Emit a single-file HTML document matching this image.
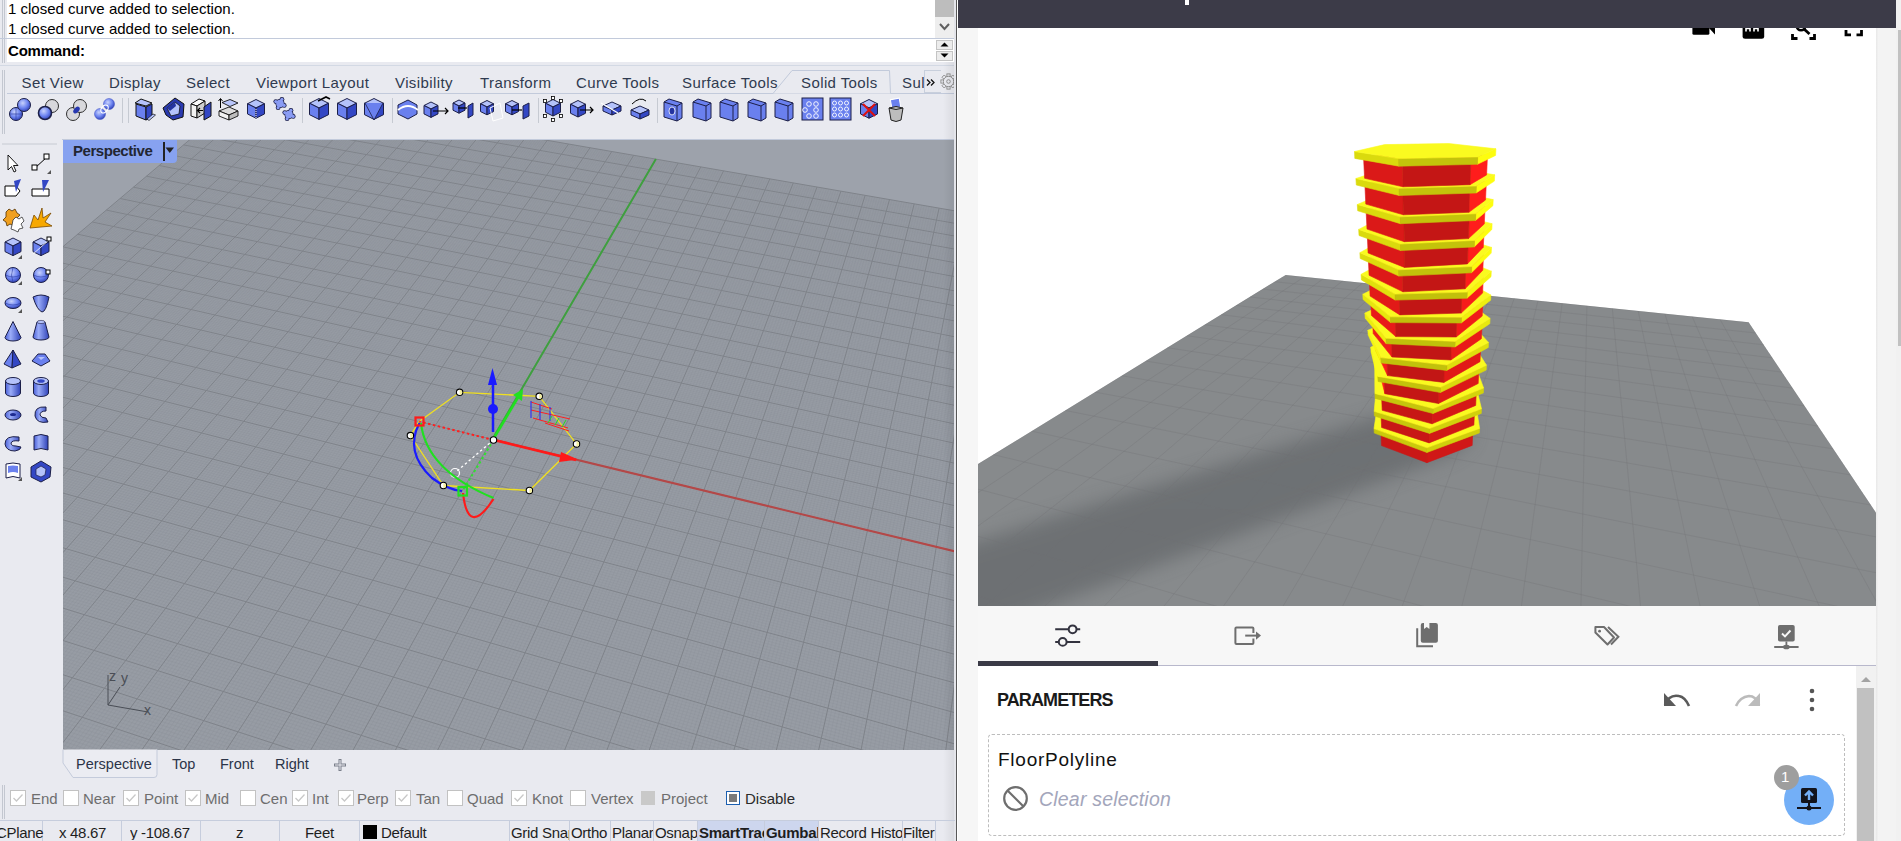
<!DOCTYPE html><html><head><meta charset="utf-8"><style>
*{margin:0;padding:0;box-sizing:border-box}
html,body{width:1901px;height:841px;overflow:hidden;background:#fff;font-family:"Liberation Sans", sans-serif}
.a{position:absolute}
.t{position:absolute;white-space:nowrap;line-height:1}
</style></head><body>
<div class="a" style="left:0;top:0;width:957px;height:841px;background:#e9eaf0;overflow:hidden"><div class="a" style="left:2px;top:0;width:1px;height:63px;background:#c3c7d0"></div><div class="a" style="left:4px;top:0;width:1px;height:63px;background:#c3c7d0"></div><div class="a" style="left:7px;top:0;width:948px;height:62px;background:#fff"></div><div class="t" style="left:8px;top:1px;font-size:15px;color:#000">1 closed curve added to selection.</div><div class="t" style="left:8px;top:21px;font-size:15px;color:#000">1 closed curve added to selection.</div><div class="a" style="left:0;top:38px;width:955px;height:1px;background:#c2cadb"></div><div class="t" style="left:8px;top:42.5px;font-size:15px;font-weight:bold;color:#000;letter-spacing:-0.2px">Command:</div><div class="a" style="left:935px;top:0;width:19px;height:38px;background:#eeeeee"></div><div class="a" style="left:935px;top:0;width:19px;height:17px;background:#bdbdbd"></div><svg class="a" style="left:935px;top:17px" width="19" height="21"><path d="M5 7 L9.5 12 L14 7" stroke="#606060" stroke-width="2" fill="none"/></svg><div class="a" style="left:936px;top:40px;width:17px;height:10px;background:#ececec;border:1px solid #c4c4c4"></div><div class="a" style="left:936px;top:51px;width:17px;height:10px;background:#ececec;border:1px solid #c4c4c4"></div><svg class="a" style="left:936px;top:40px" width="17" height="21"><path d="M4.5 6.5 L8.5 2.5 L12.5 6.5Z M4.5 13.5 L8.5 17.5 L12.5 13.5Z" fill="#000"/></svg><div class="a" style="left:0;top:65px;width:955px;height:1px;background:#d3d9e4"></div><div class="a" style="left:2px;top:70px;width:1px;height:64px;background:#c3c7d0"></div><div class="a" style="left:4px;top:70px;width:1px;height:64px;background:#c3c7d0"></div><div class="a" style="left:7px;top:93px;width:948px;height:1px;background:#c2cadb"></div><svg class="a" style="left:770px;top:69px" width="130" height="26"><path d="M3 24.5 L22 1.5 L119.5 1.5 L120.5 24.5" fill="#e9eaf0" stroke="#c2cadb" stroke-width="1"/></svg><div class="t" style="left:21.5px;top:75px;font-size:15px;letter-spacing:0.4px;color:#2f3a4f">Set View</div><div class="t" style="left:109px;top:75px;font-size:15px;letter-spacing:0.4px;color:#2f3a4f">Display</div><div class="t" style="left:186px;top:75px;font-size:15px;letter-spacing:0.4px;color:#2f3a4f">Select</div><div class="t" style="left:256px;top:75px;font-size:15px;letter-spacing:0.4px;color:#2f3a4f">Viewport Layout</div><div class="t" style="left:395px;top:75px;font-size:15px;letter-spacing:0.4px;color:#2f3a4f">Visibility</div><div class="t" style="left:480px;top:75px;font-size:15px;letter-spacing:0.4px;color:#2f3a4f">Transform</div><div class="t" style="left:576px;top:75px;font-size:15px;letter-spacing:0.4px;color:#2f3a4f">Curve Tools</div><div class="t" style="left:682px;top:75px;font-size:15px;letter-spacing:0.4px;color:#2f3a4f">Surface Tools</div><div class="t" style="left:801px;top:75px;font-size:15px;letter-spacing:0.4px;color:#2f3a4f">Solid Tools</div><div class="t" style="left:902px;top:75px;font-size:15px;letter-spacing:0.4px;color:#2f3a4f">Sul</div><div class="a" style="left:924px;top:70px;width:17px;height:23px;border:1px solid #c8cfdc;border-right:none;background:#e9eaf0"></div><svg class="a" style="left:925px;top:78px" width="12" height="10"><path d="M2 1.5 L5 4.5 L2 7.5 M6 1.5 L9 4.5 L6 7.5" stroke="#111" stroke-width="1.3" fill="none"/></svg><svg class="a" style="left:940px;top:73px" width="17" height="17"><g transform="translate(8.5 8.5)"><rect x="-1.6" y="-7.6" width="3.2" height="3" fill="none" stroke="#8a8a8a" stroke-width="0.9" transform="rotate(0)"/><rect x="-1.6" y="-7.6" width="3.2" height="3" fill="none" stroke="#8a8a8a" stroke-width="0.9" transform="rotate(45)"/><rect x="-1.6" y="-7.6" width="3.2" height="3" fill="none" stroke="#8a8a8a" stroke-width="0.9" transform="rotate(90)"/><rect x="-1.6" y="-7.6" width="3.2" height="3" fill="none" stroke="#8a8a8a" stroke-width="0.9" transform="rotate(135)"/><rect x="-1.6" y="-7.6" width="3.2" height="3" fill="none" stroke="#8a8a8a" stroke-width="0.9" transform="rotate(180)"/><rect x="-1.6" y="-7.6" width="3.2" height="3" fill="none" stroke="#8a8a8a" stroke-width="0.9" transform="rotate(225)"/><rect x="-1.6" y="-7.6" width="3.2" height="3" fill="none" stroke="#8a8a8a" stroke-width="0.9" transform="rotate(270)"/><rect x="-1.6" y="-7.6" width="3.2" height="3" fill="none" stroke="#8a8a8a" stroke-width="0.9" transform="rotate(315)"/><circle r="5.2" fill="#e9eaf0" stroke="#8a8a8a" stroke-width="0.9"/><circle r="1.8" fill="none" stroke="#8a8a8a" stroke-width="0.9"/></g></svg><div class="a" style="left:62px;top:139px;width:893px;height:1px;background:#c2cadb"></div><svg class="a" style="left:0;top:0" width="957" height="140"><defs><radialGradient id="sph" cx="0.4" cy="0.35" r="0.7"><stop offset="0" stop-color="#c8d2fc"/><stop offset="0.55" stop-color="#6d84f0"/><stop offset="1" stop-color="#2c3cb0"/></radialGradient>
<linearGradient id="cyl" x1="0" x2="1" y1="0" y2="0"><stop offset="0" stop-color="#4a60d8"/><stop offset="0.35" stop-color="#9aacf8"/><stop offset="1" stop-color="#2f42b8"/></linearGradient></defs><circle cx="16" cy="114" r="6.5" fill="url(#sph)" stroke="#1c1f48" stroke-width="1"/><circle cx="24" cy="105" r="6.5" fill="url(#sph)" stroke="#1c1f48" stroke-width="1"/><path d="M10 114 H22 M16 108 V120" stroke="#2a3aa0" stroke-width="0.6"/><circle cx="52" cy="106" r="6.5" fill="#d8d8dc" stroke="#303030" stroke-width="1"/><circle cx="45" cy="113" r="6.5" fill="url(#sph)" stroke="#1c1f48" stroke-width="1.6"/><circle cx="73" cy="114" r="6.5" fill="#d8d8dc" stroke="#303030" stroke-width="1"/><circle cx="80" cy="106" r="6.5" fill="#d8d8dc" stroke="#303030" stroke-width="1"/><ellipse cx="76.5" cy="110" rx="2.5" ry="4" transform="rotate(40 76.5 110)" fill="#2838b0"/><circle cx="100" cy="114" r="5.5" fill="url(#sph)" stroke="#3a4ac0" stroke-width="0.5"/><circle cx="109" cy="104" r="5.5" fill="url(#sph)" stroke="#3a4ac0" stroke-width="0.5"/><ellipse cx="104.5" cy="109" rx="3" ry="4.5" transform="rotate(40 104.5 109)" fill="none" stroke="#fff" stroke-width="1.2"/><path d="M122.5 98 V123 M128.5 98 V123" stroke="#c6cad2"/><path d="M135 103 L141 99 L152 103 L146 106 Z" fill="#b4c2fa" stroke="#111"/><path d="M136 104 L146 107 L146 120 L136 116 Z" fill="#6a80ee" stroke="#111"/><path d="M146 107 L152 104 L152 117 L146 120 Z" fill="#3347c4" stroke="#111"/><path d="M147 119 L153 114 L155.5 115 L149 120.5 Z" fill="#b4c2fa" stroke="#111" stroke-width="0.7"/><path d="M163 108 L175 98 L184 104 L183 117 L173 120 L166 115 Z" fill="#2a3ab0" stroke="#111"/><path d="M167 108 L175 102 L180 106 L179 114 L171 116 Z" fill="#b4c2fa" stroke="#111" stroke-width="0.8"/><path d="M167 108 L175 102 L176 106 L170 111 Z" fill="#2433a0"/><path d="M191 104 L199 99 L205 101 L197 106 Z" fill="#fafafa" stroke="#111"/><path d="M191 104 L197 106 L197 118 L191 116 Z" fill="#f2f2f2" stroke="#111"/><path d="M197 106 L205 101 L205 113 L197 118 Z" fill="#cfcfcf" stroke="#111"/><path d="M204 107 L211 102 L211 116 L204 120 Z" fill="#3347c4" stroke="#111"/><path d="M203 110.5 H198 M200 108 L197.5 110.5 L200 113" stroke="#000" stroke-width="1.2" fill="none"/><path d="M222 102.5 L230 99.5 L238 103 L230 106.5 Z" fill="#b9c6fb" stroke="#111" stroke-width="0.9"/><path d="M219 111 L229 107 L238 111 L229 115 Z" fill="#dcdcdc" stroke="#111" stroke-width="0.9"/><path d="M219 111 L229 115 L229 120 L219 116 Z" fill="#f2f2f2" stroke="#111" stroke-width="0.9"/><path d="M229 115 L238 111 L238 116 L229 120 Z" fill="#bdbdbd" stroke="#111" stroke-width="0.9"/><path d="M220.5 108 V99 M218.5 101 L220.5 98.5 L222.5 101" stroke="#000" stroke-width="1" fill="none"/><path d="M247.5,103.75 L256,99.5 L264.5,103.75 L256,108 Z" fill="#b4c2fa" stroke="#1c1f48" stroke-width="1"/><path d="M247.5,103.75 L256,108 L256,118.2 L247.5,113.95 Z" fill="#6a80ee" stroke="#1c1f48" stroke-width="1"/><path d="M256,108 L264.5,103.75 L264.5,113.95 L256,118.2 Z" fill="#3347c4" stroke="#1c1f48" stroke-width="1"/><path d="M256 109 V120" stroke="#fff" stroke-dasharray="1 1"/><circle cx="284.2" cy="105.4" r="2.4" fill="#1c1f48"/><circle cx="278.1" cy="107.7" r="2.4" fill="#1c1f48"/><circle cx="275.8" cy="101.6" r="2.4" fill="#1c1f48"/><circle cx="281.9" cy="99.3" r="2.4" fill="#1c1f48"/><circle cx="280" cy="103.5" r="4.6" fill="#1c1f48"/><circle cx="284.2" cy="105.4" r="1.6" fill="#8a9cf4"/><circle cx="278.1" cy="107.7" r="1.6" fill="#8a9cf4"/><circle cx="275.8" cy="101.6" r="1.6" fill="#8a9cf4"/><circle cx="281.9" cy="99.3" r="1.6" fill="#8a9cf4"/><circle cx="280" cy="103.5" r="3.8" fill="#8a9cf4"/><circle cx="293.2" cy="116.4" r="2.4" fill="#1c1f48"/><circle cx="287.1" cy="118.7" r="2.4" fill="#1c1f48"/><circle cx="284.8" cy="112.6" r="2.4" fill="#1c1f48"/><circle cx="290.9" cy="110.3" r="2.4" fill="#1c1f48"/><circle cx="289" cy="114.5" r="4.6" fill="#1c1f48"/><circle cx="293.2" cy="116.4" r="1.6" fill="#8a9cf4"/><circle cx="287.1" cy="118.7" r="1.6" fill="#8a9cf4"/><circle cx="284.8" cy="112.6" r="1.6" fill="#8a9cf4"/><circle cx="290.9" cy="110.3" r="1.6" fill="#8a9cf4"/><circle cx="289" cy="114.5" r="3.8" fill="#8a9cf4"/><path d="M302.5 98 V123" stroke="#c6cad2"/><path d="M309.5,103.25 L319,98.5 L328.5,103.25 L319,108 Z" fill="#b4c2fa" stroke="#1c1f48" stroke-width="1"/><path d="M309.5,103.25 L319,108 L319,119.4 L309.5,114.65 Z" fill="#6a80ee" stroke="#1c1f48" stroke-width="1"/><path d="M319,108 L328.5,103.25 L328.5,114.65 L319,119.4 Z" fill="#3347c4" stroke="#1c1f48" stroke-width="1"/><path d="M318 101 L326 97 L330 99" stroke="#000" stroke-width="1.6" fill="none"/><path d="M337.5,103.25 L347,98.5 L356.5,103.25 L347,108 Z" fill="#b4c2fa" stroke="#1c1f48" stroke-width="1"/><path d="M337.5,103.25 L347,108 L347,119.4 L337.5,114.65 Z" fill="#6a80ee" stroke="#1c1f48" stroke-width="1"/><path d="M347,108 L356.5,103.25 L356.5,114.65 L347,119.4 Z" fill="#3347c4" stroke="#1c1f48" stroke-width="1"/><path d="M364.5,103.25 L374,98.5 L383.5,103.25 L374,108 Z" fill="#b4c2fa" stroke="#1c1f48" stroke-width="1"/><path d="M364.5,103.25 L374,108 L374,119.4 L364.5,114.65 Z" fill="#6a80ee" stroke="#1c1f48" stroke-width="1"/><path d="M374,108 L383.5,103.25 L383.5,114.65 L374,119.4 Z" fill="#3347c4" stroke="#1c1f48" stroke-width="1"/><path d="M365 103 L374 120 L383 103" stroke="#1c1f48" fill="#6a80ee" stroke-width="0.8"/><path d="M392.5 98 V123" stroke="#c6cad2"/><path d="M398 105 L408 100 L417 105 L417 114 L408 119 L398 114 Z" fill="#6a80ee" stroke="#1c1f48"/><path d="M398 110 Q408 102 418 110" stroke="#fff" stroke-width="2" fill="none"/><path d="M424.0,105.5 L431,102.0 L438.0,105.5 L431,109 Z" fill="#b4c2fa" stroke="#1c1f48" stroke-width="1"/><path d="M424.0,105.5 L431,109 L431,117.4 L424.0,113.9 Z" fill="#6a80ee" stroke="#1c1f48" stroke-width="1"/><path d="M431,109 L438.0,105.5 L438.0,113.9 L431,117.4 Z" fill="#3347c4" stroke="#1c1f48" stroke-width="1"/><path d="M433 111 H448 M445 108 L448 111 L445 114" stroke="#000" stroke-width="1.2" fill="none"/><path d="M453.0,103.0 L459,100.0 L465.0,103.0 L459,106 Z" fill="#b4c2fa" stroke="#1c1f48" stroke-width="1"/><path d="M453.0,103.0 L459,106 L459,113.2 L453.0,110.2 Z" fill="#6a80ee" stroke="#1c1f48" stroke-width="1"/><path d="M459,106 L465.0,103.0 L465.0,110.2 L459,113.2 Z" fill="#3347c4" stroke="#1c1f48" stroke-width="1"/><path d="M468 106 L473 103 L473 115 L468 118 Z" fill="#3347c4" stroke="#1c1f48"/><path d="M458 108 H467" stroke="#000" stroke-width="1.2"/><path d="M480.5,103.75 L487,100.5 L493.5,103.75 L487,107 Z" fill="#b4c2fa" stroke="#1c1f48" stroke-width="1"/><path d="M480.5,103.75 L487,107 L487,114.8 L480.5,111.55 Z" fill="#6a80ee" stroke="#1c1f48" stroke-width="1"/><path d="M487,107 L493.5,103.75 L493.5,111.55 L487,114.8 Z" fill="#3347c4" stroke="#1c1f48" stroke-width="1"/><path d="M490 108 L500 103 L503 118 L493 121 Z" fill="none" stroke="#fff"/><path d="M505.5,103.75 L512,100.5 L518.5,103.75 L512,107 Z" fill="#b4c2fa" stroke="#1c1f48" stroke-width="1"/><path d="M505.5,103.75 L512,107 L512,114.8 L505.5,111.55 Z" fill="#6a80ee" stroke="#1c1f48" stroke-width="1"/><path d="M512,107 L518.5,103.75 L518.5,111.55 L512,114.8 Z" fill="#3347c4" stroke="#1c1f48" stroke-width="1"/><path d="M523 106 L529 103 L529 116 L523 119 Z" fill="#3347c4" stroke="#1c1f48"/><path d="M512 110 H522" stroke="#000" stroke-width="1.2"/><path d="M538.5 98 V123" stroke="#c6cad2"/><path d="M545.5,103.25 L553,99.5 L560.5,103.25 L553,107 Z" fill="#b4c2fa" stroke="#1c1f48" stroke-width="1"/><path d="M545.5,103.25 L553,107 L553,116.0 L545.5,112.25 Z" fill="#6a80ee" stroke="#1c1f48" stroke-width="1"/><path d="M553,107 L560.5,103.25 L560.5,112.25 L553,116.0 Z" fill="#3347c4" stroke="#1c1f48" stroke-width="1"/><rect x="543.5" y="99.5" width="3" height="3" fill="#fff" stroke="#000" stroke-width="0.8"/><rect x="559.5" y="99.5" width="3" height="3" fill="#fff" stroke="#000" stroke-width="0.8"/><rect x="543.5" y="114.5" width="3" height="3" fill="#fff" stroke="#000" stroke-width="0.8"/><rect x="559.5" y="114.5" width="3" height="3" fill="#fff" stroke="#000" stroke-width="0.8"/><rect x="551.5" y="96.5" width="3" height="3" fill="#fff" stroke="#000" stroke-width="0.8"/><rect x="551.5" y="118.5" width="3" height="3" fill="#fff" stroke="#000" stroke-width="0.8"/><path d="M570.5,104.25 L578,100.5 L585.5,104.25 L578,108 Z" fill="#b4c2fa" stroke="#1c1f48" stroke-width="1"/><path d="M570.5,104.25 L578,108 L578,117.0 L570.5,113.25 Z" fill="#6a80ee" stroke="#1c1f48" stroke-width="1"/><path d="M578,108 L585.5,104.25 L585.5,113.25 L578,117.0 Z" fill="#3347c4" stroke="#1c1f48" stroke-width="1"/><path d="M580 110 H593 M590 107 L593 110 L590 113" stroke="#000" stroke-width="1.2" fill="none"/><path d="M603,106 L612,102 L621,106 L612,110 Z" fill="#b4c2fa" stroke="#1c1f48"/><path d="M603,106 L612,110 L612,115 L603,111 Z" fill="#6a80ee" stroke="#1c1f48"/><path d="M612,110 L621,106 L621,111 L612,115 Z" fill="#3347c4" stroke="#1c1f48"/><path d="M601 103 L618 113" stroke="#fff" stroke-width="1.2"/><path d="M631,110 L640,106 L649,110 L640,114 Z" fill="#b4c2fa" stroke="#1c1f48"/><path d="M631,110 L640,114 L640,119 L631,115 Z" fill="#6a80ee" stroke="#1c1f48"/><path d="M640,114 L649,110 L649,115 L640,119 Z" fill="#3347c4" stroke="#1c1f48"/><path d="M632 104 Q640 96 646 101" stroke="#000" fill="none"/><path d="M657.5 98 V123" stroke="#c6cad2"/><path d="M664 102 L669 99 L682 103 L682 118 L677 121 L664 117 Z" fill="#6a80ee" stroke="#1c1f48"/><path d="M677 106 L682 103 M677 106 L677 121 M664 102 L677 106" stroke="#1c1f48" fill="none"/><path d="M693 102 L698 99 L711 103 L711 118 L706 121 L693 117 Z" fill="#6a80ee" stroke="#1c1f48"/><path d="M706 106 L711 103 M706 106 L706 121 M693 102 L706 106" stroke="#1c1f48" fill="none"/><path d="M720 102 L725 99 L738 103 L738 118 L733 121 L720 117 Z" fill="#6a80ee" stroke="#1c1f48"/><path d="M733 106 L738 103 M733 106 L733 121 M720 102 L733 106" stroke="#1c1f48" fill="none"/><path d="M748 102 L753 99 L766 103 L766 118 L761 121 L748 117 Z" fill="#6a80ee" stroke="#1c1f48"/><path d="M761 106 L766 103 M761 106 L761 121 M748 102 L761 106" stroke="#1c1f48" fill="none"/><path d="M775 102 L780 99 L793 103 L793 118 L788 121 L775 117 Z" fill="#6a80ee" stroke="#1c1f48"/><path d="M788 106 L793 103 M788 106 L788 121 M775 102 L788 106" stroke="#1c1f48" fill="none"/><ellipse cx="672" cy="111" rx="3" ry="4" fill="#2433a0" stroke="#fff" stroke-width="0.8"/><rect x="802" y="98" width="21" height="22" fill="#6a80ee" stroke="#1c1f48"/><circle cx="809" cy="104" r="2.3" fill="none" stroke="#fff" stroke-width="0.9"/><circle cx="816" cy="104" r="2.3" fill="none" stroke="#fff" stroke-width="0.9"/><circle cx="805" cy="110" r="2.3" fill="none" stroke="#fff" stroke-width="0.9"/><circle cx="816" cy="110" r="2.3" fill="none" stroke="#fff" stroke-width="0.9"/><circle cx="809" cy="116" r="2.3" fill="none" stroke="#fff" stroke-width="0.9"/><circle cx="816" cy="116" r="2.3" fill="none" stroke="#fff" stroke-width="0.9"/><rect x="830" y="98" width="21" height="22" fill="#6a80ee" stroke="#1c1f48"/><circle cx="834.5" cy="103" r="2" fill="none" stroke="#fff" stroke-width="0.9"/><circle cx="834.5" cy="109" r="2" fill="none" stroke="#fff" stroke-width="0.9"/><circle cx="834.5" cy="115" r="2" fill="none" stroke="#fff" stroke-width="0.9"/><circle cx="840.5" cy="103" r="2" fill="none" stroke="#fff" stroke-width="0.9"/><circle cx="840.5" cy="109" r="2" fill="none" stroke="#fff" stroke-width="0.9"/><circle cx="840.5" cy="115" r="2" fill="none" stroke="#fff" stroke-width="0.9"/><circle cx="846.5" cy="103" r="2" fill="none" stroke="#fff" stroke-width="0.9"/><circle cx="846.5" cy="109" r="2" fill="none" stroke="#fff" stroke-width="0.9"/><circle cx="846.5" cy="115" r="2" fill="none" stroke="#fff" stroke-width="0.9"/><path d="M860.5,103.75 L869,99.5 L877.5,103.75 L869,108 Z" fill="#b4c2fa" stroke="#1c1f48" stroke-width="1"/><path d="M860.5,103.75 L869,108 L869,118.2 L860.5,113.95 Z" fill="#6a80ee" stroke="#1c1f48" stroke-width="1"/><path d="M869,108 L877.5,103.75 L877.5,113.95 L869,118.2 Z" fill="#3347c4" stroke="#1c1f48" stroke-width="1"/><path d="M863 104 L875 116 M875 104 L863 116" stroke="#e01010" stroke-width="2"/><rect x="891" y="99" width="9" height="9" fill="#6a80ee" stroke="#fff" transform="rotate(-10 895 103)"/><path d="M889 108 Q896 105 903 108 L901 120 Q896 123 891 120 Z" fill="#bdbdbd" stroke="#222"/><path d="M889 108 Q896 111 903 108" stroke="#222" fill="none"/></svg><svg class="a" style="left:0;top:140px" width="62" height="360"><g transform="translate(0,-140)"><defs><radialGradient id="sph2" cx="0.4" cy="0.35" r="0.7"><stop offset="0" stop-color="#c8d2fc"/><stop offset="0.55" stop-color="#6d84f0"/><stop offset="1" stop-color="#2c3cb0"/></radialGradient>
<linearGradient id="cyl2" x1="0" x2="1" y1="0" y2="0"><stop offset="0" stop-color="#4a60d8"/><stop offset="0.35" stop-color="#9aacf8"/><stop offset="1" stop-color="#2f42b8"/></linearGradient></defs><path d="M2 144 H57" stroke="#c6cad2"/><path d="M8 155 L8 170 L11.5 166.5 L14 172 L16 171 L13.5 165.5 L18 165.5 Z" fill="#fff" stroke="#000" stroke-width="0.9"/><path d="M35 168 L47 157" stroke="#000"/><rect x="32" y="165" width="5" height="5" fill="#fff" stroke="#000"/><rect x="44" y="154" width="5" height="5" fill="#fff" stroke="#000"/><path d="M47 174 l4 0 l0 -4 z" fill="#555"/><path d="M5 186 H16 L20 191 L16 196 H5 Z" fill="#fff" stroke="#000"/><path d="M14 181 L21 179 L16 192 Z" fill="#3347c4"/><path d="M32 189 H49 V196 H32 Z" fill="#fff" stroke="#000"/><path d="M42 180 L49 180 L43 192 Z" fill="#3347c4"/><path d="M6 212 l3 -3 l3 2 l3 -2 l2 4 l3 2 l-3 3 l2 4 l-4 1 l-1 3 l-4 -2 l-3 2 l-1 -4 l-3 -2 l3 -3 z" fill="#f0a020" stroke="#503000" stroke-width="0.8"/><path d="M13 220 l3 -3 l3 2 l3 -2 l2 4 l-3 3 l2 4 l-4 1 l-1 3 l-4 -2 l-3 -1 l1 -4 z" fill="#fff" stroke="#333" stroke-width="0.8"/><path d="M30 228 L34 215 L38 220 L42 208 L43 218 L51 213 L45 222 L52 226 Z" fill="#f7a800" stroke="#7a4a00" stroke-width="0.8"/><path d="M5.0,242.0 L13,238.0 L21.0,242.0 L13,246 Z" fill="#b4c2fa" stroke="#1c1f48" stroke-width="1"/><path d="M5.0,242.0 L13,246 L13,255.6 L5.0,251.6 Z" fill="#6a80ee" stroke="#1c1f48" stroke-width="1"/><path d="M13,246 L21.0,242.0 L21.0,251.6 L13,255.6 Z" fill="#3347c4" stroke="#1c1f48" stroke-width="1"/><path d="M18 259 l4 0 l0 -4 z" fill="#555"/><path d="M33.0,242.0 L41,238.0 L49.0,242.0 L41,246 Z" fill="#b4c2fa" stroke="#1c1f48" stroke-width="1"/><path d="M33.0,242.0 L41,246 L41,255.6 L33.0,251.6 Z" fill="#6a80ee" stroke="#1c1f48" stroke-width="1"/><path d="M41,246 L49.0,242.0 L49.0,251.6 L41,255.6 Z" fill="#3347c4" stroke="#1c1f48" stroke-width="1"/><path d="M33 254 L49 240" stroke="#fff" stroke-width="0.8"/><rect x="47" y="237" width="4" height="4" fill="#fff" stroke="#000"/><circle cx="13" cy="275" r="7.5" fill="url(#sph2)" stroke="#1c1f48" stroke-width="1"/><path d="M5.5 275 Q13 279 20.5 275 M13 267.5 Q10 275 13 282.5" stroke="#2a3aa0" stroke-width="0.6" fill="none"/><path d="M18 285 l4 0 l0 -4 z" fill="#555"/><circle cx="41" cy="275" r="7.5" fill="url(#sph2)" stroke="#1c1f48" stroke-width="1"/><rect x="46" y="270" width="4" height="4" fill="#fff" stroke="#000"/><path d="M33.5 275 Q41 279 48.5 275" stroke="#2a3aa0" stroke-width="0.6" fill="none"/><ellipse cx="13" cy="303" rx="8" ry="5.5" fill="url(#sph2)" stroke="#1c1f48"/><path d="M5 303 Q13 307 21 303" stroke="#2a3aa0" stroke-width="0.6" fill="none"/><path d="M18 313 l4 0 l0 -4 z" fill="#555"/><path d="M33 297 Q41 293 49 297 Q46 312 42 312 Q37 310 33 297 Z" fill="url(#cyl2)" stroke="#1c1f48"/><path d="M13,321.5 L5,337.5 A8,3.5 0 0 0 21,337.5 Z" fill="url(#cyl2)" stroke="#1c1f48" stroke-width="1"/><path d="M37 322 L45 322 L49 337 A8 3 0 0 1 33 337 Z" fill="url(#cyl2)" stroke="#1c1f48"/><ellipse cx="41" cy="322" rx="4" ry="1.6" fill="#b4c2fa" stroke="#1c1f48" stroke-width="0.6"/><path d="M13,350 L4,364 L12,368 Z" fill="#6a80ee" stroke="#1c1f48" stroke-width="1"/><path d="M13,350 L12,368 L21,364 Z" fill="#3347c4" stroke="#1c1f48" stroke-width="1"/><path d="M32 361 L38 354 L45 354 L50 361 L41 366 Z" fill="#6a80ee" stroke="#1c1f48"/><path d="M38 357 L45 357 L41 360 Z" fill="#b4c2fa"/><path d="M5.5,381 L5.5,393 A7.5,3.5 0 0 0 20.5,393 L20.5,381 Z" fill="url(#cyl2)" stroke="#1c1f48" stroke-width="1"/><ellipse cx="13" cy="381" rx="7.5" ry="3.5" fill="#b4c2fa" stroke="#1c1f48" stroke-width="1"/><path d="M33.5,381 L33.5,393 A7.5,3.5 0 0 0 48.5,393 L48.5,381 Z" fill="url(#cyl2)" stroke="#1c1f48" stroke-width="1"/><ellipse cx="41" cy="381" rx="7.5" ry="3.5" fill="#b4c2fa" stroke="#1c1f48" stroke-width="1"/><ellipse cx="41" cy="381" rx="3.75" ry="1.75" fill="#3347c4"/><ellipse cx="13" cy="415" rx="8" ry="5" fill="url(#cyl2)" stroke="#1c1f48"/><ellipse cx="13" cy="414.5" rx="3" ry="1.6" fill="#1c2a90"/><path d="M46 407 Q34 406 35 416 Q37 424 48 422 L46 418 Q41 418 40 415 Q40 411 46 411 Z" fill="url(#cyl2)" stroke="#1c1f48"/><path d="M19 437 Q5 435 5 444 Q6 451 15 451 Q21 450 21 447 L16 446 Q11 446 11 443 Q12 440 19 441 Z" fill="url(#cyl2)" stroke="#1c1f48"/><path d="M34 436 Q41 433 48 436 L48 450 Q41 447 34 450 Z" fill="url(#cyl2)" stroke="#1c1f48"/><path d="M6 464 Q13 462 20 464 L20 478 Q13 475 6 478 Z" fill="#fff" stroke="#1c1f48"/><path d="M8 466 Q13 465 18 466 L18 473 Q13 471 8 473 Z" fill="#6a80ee"/><path d="M18 481 l4 0 l0 -4 z" fill="#555"/><path d="M41 461 L51 467 L50 477 L41 482 L31 477 L31 467 Z" fill="#3347c4" stroke="#1c1f48"/><path d="M41 466 L46 469 L45 475 L41 477 L36 475 L36 469 Z" fill="#b4c2fa" stroke="#1c1f48" stroke-width="0.7"/></g></svg><svg class="a" style="left:63px;top:140px" width="892" height="610"><rect x="0" y="0" width="892" height="610" fill="#9da2ab"/><polygon points="187.0,-51.1 1085.0,104.3 1107.6,1280.6 -586.2,601.2" fill="#979ca4"/><path d="M188.9 -50.8L-583.4 602.3M-582.6 598.1L1107.5 1273.8M190.7 -50.5L-580.5 603.4M-579.0 595.1L1107.3 1267.1M192.6 -50.2L-577.7 604.6M-575.4 592.0L1107.2 1260.4M194.5 -49.9L-574.8 605.7M-571.8 589.0L1107.1 1253.7M196.3 -49.5L-572.0 606.9M-568.3 586.0L1107.0 1247.1M198.2 -49.2L-569.1 608.0M-564.7 583.0L1106.8 1240.6M200.0 -48.9L-566.2 609.2M-561.2 580.0L1106.7 1234.1M201.9 -48.6L-563.4 610.3M-557.7 577.1L1106.6 1227.6M203.8 -48.2L-560.5 611.5M-554.2 574.1L1106.5 1221.2M207.5 -47.6L-554.7 613.8M-547.2 568.3L1106.2 1208.5M209.4 -47.3L-551.8 615.0M-543.8 565.3L1106.1 1202.1M211.2 -47.0L-548.9 616.1M-540.3 562.4L1106.0 1195.9M213.1 -46.6L-546.0 617.3M-536.9 559.6L1105.9 1189.7M215.0 -46.3L-543.1 618.5M-533.5 556.7L1105.7 1183.5M216.9 -46.0L-540.2 619.6M-530.1 553.8L1105.6 1177.3M218.7 -45.7L-537.3 620.8M-526.7 551.0L1105.5 1171.2M220.6 -45.3L-534.3 622.0M-523.4 548.1L1105.4 1165.1M222.5 -45.0L-531.4 623.1M-520.0 545.3L1105.3 1159.1M226.3 -44.3L-525.5 625.5M-513.3 539.7L1105.0 1147.1M228.2 -44.0L-522.6 626.7M-510.0 536.9L1104.9 1141.2M230.1 -43.7L-519.6 627.9M-506.7 534.1L1104.8 1135.3M231.9 -43.4L-516.7 629.0M-503.5 531.3L1104.7 1129.5M233.8 -43.0L-513.7 630.2M-500.2 528.6L1104.6 1123.6M235.7 -42.7L-510.8 631.4M-496.9 525.8L1104.5 1117.8M237.6 -42.4L-507.8 632.6M-493.7 523.1L1104.4 1112.1M239.5 -42.1L-504.8 633.8M-490.5 520.4L1104.3 1106.4M241.4 -41.7L-501.9 635.0M-487.2 517.7L1104.1 1100.7M245.2 -41.1L-495.9 637.4M-480.8 512.3L1103.9 1089.4M247.1 -40.7L-492.9 638.6M-477.7 509.6L1103.8 1083.9M249.0 -40.4L-489.9 639.8M-474.5 506.9L1103.7 1078.3M250.9 -40.1L-486.9 641.0M-471.4 504.3L1103.6 1072.8M252.8 -39.8L-483.9 642.2M-468.2 501.6L1103.5 1067.3M254.8 -39.4L-480.9 643.4M-465.1 499.0L1103.4 1061.9M256.7 -39.1L-477.8 644.6M-462.0 496.3L1103.3 1056.4M258.6 -38.8L-474.8 645.8M-458.9 493.7L1103.2 1051.1M260.5 -38.4L-471.8 647.1M-455.8 491.1L1103.1 1045.7M264.3 -37.8L-465.7 649.5M-449.7 486.0L1102.9 1035.1M266.2 -37.4L-462.7 650.7M-446.6 483.4L1102.8 1029.8M268.2 -37.1L-459.6 651.9M-443.6 480.8L1102.7 1024.6M270.1 -36.8L-456.6 653.2M-440.6 478.3L1102.6 1019.4M272.0 -36.4L-453.5 654.4M-437.5 475.7L1102.5 1014.2M273.9 -36.1L-450.4 655.6M-434.5 473.2L1102.4 1009.1M275.9 -35.8L-447.4 656.8M-431.5 470.7L1102.3 1004.0M277.8 -35.4L-444.3 658.1M-428.6 468.2L1102.2 998.9M279.7 -35.1L-441.2 659.3M-425.6 465.7L1102.1 993.8M283.6 -34.4L-435.0 661.8M-419.7 460.7L1101.9 983.8M285.5 -34.1L-431.9 663.0M-416.8 458.2L1101.8 978.8M287.5 -33.8L-428.8 664.3M-413.9 455.7L1101.7 973.9M289.4 -33.4L-425.7 665.5M-411.0 453.3L1101.6 968.9M291.4 -33.1L-422.6 666.8M-408.1 450.9L1101.5 964.1M293.3 -32.7L-419.5 668.0M-405.2 448.4L1101.4 959.2M295.3 -32.4L-416.4 669.3M-402.3 446.0L1101.3 954.4M297.2 -32.1L-413.3 670.5M-399.4 443.6L1101.2 949.5M299.2 -31.7L-410.1 671.8M-396.6 441.2L1101.1 944.8M303.1 -31.1L-403.8 674.3M-390.9 436.4L1101.0 935.3M305.0 -30.7L-400.7 675.6M-388.1 434.0L1100.9 930.6M307.0 -30.4L-397.5 676.8M-385.3 431.6L1100.8 925.9M308.9 -30.0L-394.4 678.1M-382.5 429.3L1100.7 921.2M310.9 -29.7L-391.2 679.4M-379.7 426.9L1100.6 916.6M312.9 -29.4L-388.0 680.7M-376.9 424.6L1100.5 912.0M314.8 -29.0L-384.8 681.9M-374.2 422.3L1100.4 907.4M316.8 -28.7L-381.7 683.2M-371.4 419.9L1100.3 902.9M318.8 -28.3L-378.5 684.5M-368.7 417.6L1100.3 898.3M322.7 -27.7L-372.1 687.0M-363.2 413.0L1100.1 889.3M324.7 -27.3L-368.9 688.3M-360.5 410.7L1100.0 884.9M326.6 -27.0L-365.7 689.6M-357.8 408.5L1099.9 880.5M328.6 -26.6L-362.4 690.9M-355.1 406.2L1099.8 876.0M330.6 -26.3L-359.2 692.2M-352.4 403.9L1099.7 871.6M332.6 -25.9L-356.0 693.5M-349.8 401.7L1099.7 867.3M334.6 -25.6L-352.8 694.8M-347.1 399.4L1099.6 862.9M336.5 -25.3L-349.5 696.1M-344.4 397.2L1099.5 858.6M338.5 -24.9L-346.3 697.4M-341.8 395.0L1099.4 854.3M342.5 -24.2L-339.8 700.0M-336.5 390.5L1099.2 845.8M344.5 -23.9L-336.5 701.3M-333.9 388.3L1099.2 841.6M346.5 -23.5L-333.2 702.6M-331.3 386.1L1099.1 837.4M348.5 -23.2L-329.9 703.9M-328.7 383.9L1099.0 833.2M350.5 -22.8L-326.7 705.3M-326.2 381.8L1098.9 829.0M352.5 -22.5L-323.4 706.6M-323.6 379.6L1098.8 824.9M354.5 -22.2L-320.1 707.9M-321.0 377.4L1098.8 820.7M356.5 -21.8L-316.8 709.2M-318.5 375.3L1098.7 816.6M358.5 -21.5L-313.5 710.5M-315.9 373.1L1098.6 812.5M362.5 -20.8L-306.9 713.2M-310.9 368.9L1098.5 804.4M364.5 -20.4L-303.5 714.5M-308.3 366.7L1098.4 800.4M366.5 -20.1L-300.2 715.9M-305.8 364.6L1098.3 796.4M368.5 -19.7L-296.9 717.2M-303.3 362.5L1098.2 792.4M370.5 -19.4L-293.5 718.5M-300.8 360.4L1098.1 788.5M372.6 -19.0L-290.2 719.9M-298.4 358.3L1098.1 784.5M374.6 -18.7L-286.8 721.2M-295.9 356.2L1098.0 780.6M376.6 -18.3L-283.5 722.6M-293.4 354.2L1097.9 776.7M378.6 -18.0L-280.1 723.9M-291.0 352.1L1097.8 772.8M382.7 -17.3L-273.4 726.6M-286.1 348.0L1097.7 765.1M384.7 -16.9L-270.0 728.0M-283.7 345.9L1097.6 761.3M386.7 -16.6L-266.6 729.4M-281.2 343.9L1097.5 757.5M388.8 -16.2L-263.2 730.7M-278.8 341.8L1097.5 753.7M390.8 -15.9L-259.8 732.1M-276.4 339.8L1097.4 749.9M392.8 -15.5L-256.4 733.4M-274.0 337.8L1097.3 746.2M394.9 -15.2L-253.0 734.8M-271.6 335.8L1097.3 742.4M396.9 -14.8L-249.6 736.2M-269.3 333.8L1097.2 738.7M398.9 -14.5L-246.2 737.6M-266.9 331.8L1097.1 735.0M403.0 -13.7L-239.3 740.3M-262.2 327.8L1097.0 727.7M405.1 -13.4L-235.8 741.7M-259.8 325.8L1096.9 724.0M407.1 -13.0L-232.4 743.1M-257.5 323.9L1096.8 720.4M409.2 -12.7L-228.9 744.5M-255.2 321.9L1096.8 716.8M411.2 -12.3L-225.5 745.8M-252.9 319.9L1096.7 713.2M413.3 -12.0L-222.0 747.2M-250.6 318.0L1096.6 709.6M415.3 -11.6L-218.5 748.6M-248.2 316.0L1096.6 706.1M417.4 -11.3L-215.1 750.0M-246.0 314.1L1096.5 702.5M419.5 -10.9L-211.6 751.4M-243.7 312.2L1096.4 699.0M423.6 -10.2L-204.6 754.2M-239.1 308.3L1096.3 692.0M425.6 -9.8L-201.1 755.6M-236.9 306.4L1096.2 688.5M427.7 -9.5L-197.6 757.0M-234.6 304.5L1096.2 685.1M429.8 -9.1L-194.0 758.5M-232.4 302.6L1096.1 681.6M431.9 -8.8L-190.5 759.9M-230.1 300.8L1096.0 678.2M433.9 -8.4L-187.0 761.3M-227.9 298.9L1096.0 674.8M436.0 -8.0L-183.4 762.7M-225.7 297.0L1095.9 671.4M438.1 -7.7L-179.9 764.1M-223.4 295.1L1095.8 668.0M440.2 -7.3L-176.3 765.6M-221.2 293.3L1095.8 664.6M444.3 -6.6L-169.2 768.4M-216.8 289.6L1095.6 658.0M446.4 -6.2L-165.6 769.8M-214.7 287.7L1095.6 654.6M448.5 -5.9L-162.1 771.3M-212.5 285.9L1095.5 651.3M450.6 -5.5L-158.5 772.7M-210.3 284.0L1095.4 648.0M452.7 -5.1L-154.9 774.2M-208.1 282.2L1095.4 644.8M454.8 -4.8L-151.3 775.6M-206.0 280.4L1095.3 641.5M456.9 -4.4L-147.7 777.0M-203.8 278.6L1095.3 638.3M459.0 -4.1L-144.1 778.5M-201.7 276.8L1095.2 635.0M461.1 -3.7L-140.5 779.9M-199.6 275.0L1095.1 631.8M465.3 -3.0L-133.2 782.9M-195.3 271.4L1095.0 625.4M467.4 -2.6L-129.6 784.3M-193.2 269.6L1094.9 622.3M469.5 -2.2L-125.9 785.8M-191.1 267.8L1094.9 619.1M471.6 -1.9L-122.3 787.2M-189.0 266.1L1094.8 616.0M473.7 -1.5L-118.6 788.7M-186.9 264.3L1094.8 612.8M475.8 -1.1L-114.9 790.2M-184.8 262.5L1094.7 609.7M477.9 -0.8L-111.3 791.7M-182.7 260.8L1094.6 606.6M480.0 -0.4L-107.6 793.1M-180.7 259.0L1094.6 603.5M482.1 -0.0L-103.9 794.6M-178.6 257.3L1094.5 600.5M486.4 0.7L-96.5 797.6M-174.5 253.8L1094.4 594.3M488.5 1.1L-92.8 799.1M-172.4 252.1L1094.4 591.3M490.6 1.4L-89.1 800.6M-170.4 250.4L1094.3 588.3M492.8 1.8L-85.4 802.0M-168.4 248.7L1094.2 585.3M494.9 2.2L-81.6 803.5M-166.3 247.0L1094.2 582.3M497.0 2.5L-77.9 805.0M-164.3 245.3L1094.1 579.3M499.2 2.9L-74.2 806.5M-162.3 243.6L1094.1 576.3M501.3 3.3L-70.4 808.0M-160.3 241.9L1094.0 573.4M503.4 3.6L-66.7 809.6M-158.3 240.2L1093.9 570.4M507.7 4.4L-59.1 812.6M-154.3 236.8L1093.8 564.6M509.9 4.8L-55.4 814.1M-152.4 235.2L1093.8 561.7M512.0 5.1L-51.6 815.6M-150.4 233.5L1093.7 558.8M514.2 5.5L-47.8 817.1M-148.4 231.8L1093.7 555.9M516.3 5.9L-44.0 818.7M-146.5 230.2L1093.6 553.0M518.5 6.2L-40.2 820.2M-144.5 228.5L1093.6 550.2M520.6 6.6L-36.4 821.7M-142.6 226.9L1093.5 547.3M522.8 7.0L-32.5 823.2M-140.6 225.3L1093.5 544.5M524.9 7.4L-28.7 824.8M-138.7 223.6L1093.4 541.7M529.2 8.1L-21.0 827.9M-134.8 220.4L1093.3 536.1M531.4 8.5L-17.2 829.4M-132.9 218.8L1093.2 533.3M533.6 8.9L-13.3 830.9M-131.0 217.1L1093.2 530.5M535.7 9.2L-9.4 832.5M-129.1 215.5L1093.1 527.8M537.9 9.6L-5.6 834.1M-127.2 213.9L1093.1 525.0M540.1 10.0L-1.7 835.6M-125.3 212.3L1093.0 522.3M542.3 10.4L2.2 837.2M-123.4 210.8L1093.0 519.5M544.4 10.7L6.1 838.7M-121.5 209.2L1092.9 516.8M546.6 11.1L10.0 840.3M-119.7 207.6L1092.9 514.1M551.0 11.9L17.8 843.4M-115.9 204.4L1092.8 508.7M553.2 12.3L21.7 845.0M-114.1 202.9L1092.7 506.1M555.4 12.6L25.7 846.6M-112.2 201.3L1092.7 503.4M557.5 13.0L29.6 848.2M-110.4 199.8L1092.6 500.8M559.7 13.4L33.6 849.8M-108.5 198.2L1092.6 498.1M561.9 13.8L37.5 851.3M-106.7 196.7L1092.5 495.5M564.1 14.2L41.5 852.9M-104.9 195.1L1092.5 492.9M566.3 14.5L45.5 854.5M-103.1 193.6L1092.4 490.3M568.5 14.9L49.4 856.1M-101.3 192.0L1092.4 487.7M572.9 15.7L57.4 859.3M-97.6 189.0L1092.3 482.5M575.1 16.1L61.4 860.9M-95.8 187.5L1092.2 479.9M577.3 16.4L65.4 862.5M-94.0 186.0L1092.2 477.4M579.6 16.8L69.4 864.1M-92.3 184.5L1092.1 474.8M581.8 17.2L73.5 865.8M-90.5 183.0L1092.1 472.3M584.0 17.6L77.5 867.4M-88.7 181.5L1092.0 469.8M586.2 18.0L81.6 869.0M-86.9 180.0L1092.0 467.3M588.4 18.4L85.6 870.6M-85.2 178.5L1091.9 464.8M590.6 18.7L89.7 872.3M-83.4 177.0L1091.9 462.3M595.1 19.5L97.8 875.5M-79.9 174.0L1091.8 457.3M597.3 19.9L101.9 877.2M-78.1 172.6L1091.7 454.8M599.5 20.3L106.0 878.8M-76.4 171.1L1091.7 452.4M601.8 20.7L110.1 880.4M-74.7 169.6L1091.6 449.9M604.0 21.1L114.2 882.1M-72.9 168.2L1091.6 447.5M606.2 21.4L118.3 883.7M-71.2 166.7L1091.5 445.1M608.5 21.8L122.4 885.4M-69.5 165.3L1091.5 442.6M610.7 22.2L126.5 887.0M-67.8 163.8L1091.4 440.2M613.0 22.6L130.7 888.7M-66.1 162.4L1091.4 437.8M617.5 23.4L139.0 892.0M-62.7 159.5L1091.3 433.1M619.7 23.8L143.2 893.7M-61.0 158.1L1091.3 430.7M622.0 24.2L147.3 895.4M-59.3 156.6L1091.2 428.3M624.2 24.6L151.5 897.1M-57.6 155.2L1091.2 426.0M626.5 24.9L155.7 898.7M-55.9 153.8L1091.1 423.6M628.7 25.3L159.9 900.4M-54.3 152.4L1091.1 421.3M631.0 25.7L164.1 902.1M-52.6 151.0L1091.0 419.0M633.2 26.1L168.3 903.8M-50.9 149.6L1091.0 416.7M635.5 26.5L172.5 905.5M-49.3 148.2L1090.9 414.4M640.0 27.3L181.0 908.9M-46.0 145.4L1090.9 409.8M642.3 27.7L185.3 910.6M-44.3 144.0L1090.8 407.5M644.6 28.1L189.5 912.3M-42.7 142.6L1090.8 405.2M646.9 28.5L193.8 914.0M-41.0 141.3L1090.7 402.9M649.1 28.9L198.0 915.7M-39.4 139.9L1090.7 400.7M651.4 29.3L202.3 917.4M-37.8 138.5L1090.6 398.4M653.7 29.7L206.6 919.2M-36.2 137.1L1090.6 396.2M656.0 30.1L210.9 920.9M-34.6 135.8L1090.6 394.0M658.3 30.5L215.2 922.6M-32.9 134.4L1090.5 391.7M662.9 31.2L223.9 926.1M-29.7 131.7L1090.4 387.3M665.1 31.6L228.2 927.8M-28.1 130.4L1090.4 385.1M667.4 32.0L232.6 929.6M-26.6 129.0L1090.3 382.9M669.7 32.4L236.9 931.3M-25.0 127.7L1090.3 380.8M672.0 32.8L241.3 933.1M-23.4 126.4L1090.3 378.6M674.3 33.2L245.6 934.8M-21.8 125.0L1090.2 376.4M676.6 33.6L250.0 936.6M-20.2 123.7L1090.2 374.3M678.9 34.0L254.4 938.3M-18.7 122.4L1090.1 372.1M681.3 34.4L258.8 940.1M-17.1 121.1L1090.1 370.0M685.9 35.2L267.6 943.6M-14.0 118.4L1090.0 365.7M688.2 35.6L272.0 945.4M-12.4 117.1L1090.0 363.6M690.5 36.0L276.5 947.2M-10.9 115.8L1089.9 361.5M692.8 36.4L280.9 949.0M-9.3 114.5L1089.9 359.4M695.2 36.8L285.4 950.8M-7.8 113.2L1089.8 357.3M697.5 37.2L289.8 952.5M-6.3 111.9L1089.8 355.2M699.8 37.6L294.3 954.3M-4.7 110.6L1089.8 353.1M702.1 38.0L298.8 956.1M-3.2 109.4L1089.7 351.0M704.5 38.5L303.3 957.9M-1.7 108.1L1089.7 349.0M709.1 39.3L312.3 961.5M1.3 105.5L1089.6 344.9M711.5 39.7L316.8 963.4M2.8 104.2L1089.6 342.8M713.8 40.1L321.3 965.2M4.3 103.0L1089.5 340.8M716.2 40.5L325.9 967.0M5.8 101.7L1089.5 338.8M718.5 40.9L330.4 968.8M7.3 100.5L1089.5 336.7M720.9 41.3L335.0 970.6M8.8 99.2L1089.4 334.7M723.2 41.7L339.5 972.5M10.3 97.9L1089.4 332.7M725.6 42.1L344.1 974.3M11.8 96.7L1089.3 330.7M727.9 42.5L348.7 976.1M13.3 95.4L1089.3 328.7M732.6 43.3L357.9 979.8M16.2 93.0L1089.2 324.8M735.0 43.7L362.5 981.7M17.7 91.7L1089.2 322.8M737.4 44.1L367.1 983.5M19.1 90.5L1089.1 320.8M739.7 44.6L371.7 985.4M20.6 89.3L1089.1 318.9M742.1 45.0L376.4 987.3M22.0 88.0L1089.1 316.9M744.5 45.4L381.0 989.1M23.5 86.8L1089.0 315.0M746.8 45.8L385.7 991.0M24.9 85.6L1089.0 313.0M749.2 46.2L390.4 992.9M26.4 84.4L1089.0 311.1M751.6 46.6L395.1 994.7M27.8 83.2L1088.9 309.2M756.4 47.4L404.4 998.5M30.7 80.8L1088.9 305.4M758.7 47.8L409.2 1000.4M32.1 79.6L1088.8 303.5M761.1 48.3L413.9 1002.3M33.5 78.4L1088.8 301.6M763.5 48.7L418.6 1004.2M34.9 77.2L1088.7 299.7M765.9 49.1L423.3 1006.1M36.4 76.0L1088.7 297.8M768.3 49.5L428.1 1008.0M37.8 74.8L1088.7 295.9M770.7 49.9L432.9 1009.9M39.2 73.6L1088.6 294.0M773.1 50.3L437.6 1011.8M40.6 72.4L1088.6 292.2M775.5 50.8L442.4 1013.7M42.0 71.2L1088.6 290.3M780.3 51.6L452.0 1017.6M44.8 68.9L1088.5 286.6M782.7 52.0L456.8 1019.5M46.1 67.7L1088.5 284.8M785.1 52.4L461.6 1021.5M47.5 66.5L1088.4 282.9M787.5 52.8L466.5 1023.4M48.9 65.4L1088.4 281.1M790.0 53.3L471.3 1025.3M50.3 64.2L1088.3 279.3M792.4 53.7L476.2 1027.3M51.7 63.1L1088.3 277.5M794.8 54.1L481.0 1029.2M53.0 61.9L1088.3 275.7M797.2 54.5L485.9 1031.2M54.4 60.8L1088.2 273.9M799.7 54.9L490.8 1033.1M55.8 59.6L1088.2 272.1M804.5 55.8L500.6 1037.1M58.5 57.3L1088.1 268.5M806.9 56.2L505.5 1039.1M59.8 56.2L1088.1 266.7M809.4 56.6L510.4 1041.0M61.2 55.0L1088.1 264.9M811.8 57.0L515.4 1043.0M62.5 53.9L1088.0 263.2M814.3 57.5L520.3 1045.0M63.8 52.8L1088.0 261.4M816.7 57.9L525.3 1047.0M65.2 51.7L1088.0 259.7M819.1 58.3L530.3 1049.0M66.5 50.5L1087.9 257.9M821.6 58.7L535.2 1051.0M67.8 49.4L1087.9 256.2M824.0 59.2L540.2 1053.0M69.2 48.3L1087.9 254.4M829.0 60.0L550.2 1057.0M71.8 46.1L1087.8 251.0M831.4 60.4L555.3 1059.0M73.1 45.0L1087.8 249.3M833.9 60.9L560.3 1061.0M74.4 43.9L1087.7 247.5M836.3 61.3L565.4 1063.1M75.7 42.7L1087.7 245.8M838.8 61.7L570.4 1065.1M77.0 41.6L1087.7 244.1M841.3 62.1L575.5 1067.1M78.3 40.6L1087.6 242.4M843.7 62.6L580.6 1069.2M79.6 39.5L1087.6 240.7M846.2 63.0L585.7 1071.2M80.9 38.4L1087.6 239.1M848.7 63.4L590.8 1073.2M82.2 37.3L1087.5 237.4M853.6 64.3L601.0 1077.4M84.8 35.1L1087.5 234.0M856.1 64.7L606.1 1079.4M86.1 34.0L1087.4 232.4M858.6 65.1L611.3 1081.5M87.4 33.0L1087.4 230.7M861.1 65.6L616.4 1083.5M88.6 31.9L1087.4 229.1M863.6 66.0L621.6 1085.6M89.9 30.8L1087.4 227.4M866.1 66.4L626.8 1087.7M91.2 29.7L1087.3 225.8M868.6 66.9L632.0 1089.8M92.4 28.7L1087.3 224.1M871.1 67.3L637.2 1091.9M93.7 27.6L1087.3 222.5M873.6 67.7L642.4 1094.0M94.9 26.5L1087.2 220.9M878.6 68.6L652.9 1098.2M97.5 24.4L1087.2 217.6M881.1 69.0L658.1 1100.3M98.7 23.4L1087.1 216.0M883.6 69.5L663.4 1102.4M99.9 22.3L1087.1 214.4M886.1 69.9L668.7 1104.5M101.2 21.3L1087.1 212.8M888.6 70.3L674.0 1106.6M102.4 20.2L1087.0 211.2M891.2 70.8L679.3 1108.7M103.7 19.2L1087.0 209.6M893.7 71.2L684.6 1110.9M104.9 18.2L1087.0 208.0M896.2 71.7L689.9 1113.0M106.1 17.1L1086.9 206.4M898.7 72.1L695.2 1115.2M107.3 16.1L1086.9 204.9M903.8 73.0L706.0 1119.5M109.8 14.0L1086.9 201.7M906.3 73.4L711.3 1121.6M111.0 13.0L1086.8 200.2M908.9 73.8L716.7 1123.8M112.2 12.0L1086.8 198.6M911.4 74.3L722.1 1125.9M113.4 11.0L1086.8 197.1M913.9 74.7L727.5 1128.1M114.6 9.9L1086.7 195.5M916.5 75.2L732.9 1130.3M115.8 8.9L1086.7 194.0M919.0 75.6L738.4 1132.5M117.0 7.9L1086.7 192.4M921.6 76.0L743.8 1134.6M118.2 6.9L1086.6 190.9M924.1 76.5L749.3 1136.8M119.4 5.9L1086.6 189.4M929.3 77.4L760.2 1141.2M121.8 3.9L1086.6 186.3M931.8 77.8L765.7 1143.4M123.0 2.9L1086.5 184.8M934.4 78.3L771.2 1145.6M124.2 1.9L1086.5 183.3M936.9 78.7L776.8 1147.9M125.4 0.9L1086.5 181.8M939.5 79.2L782.3 1150.1M126.5 -0.1L1086.4 180.3M942.1 79.6L787.8 1152.3M127.7 -1.1L1086.4 178.8M944.7 80.0L793.4 1154.5M128.9 -2.1L1086.4 177.3M947.2 80.5L799.0 1156.8M130.1 -3.1L1086.4 175.8M949.8 80.9L804.6 1159.0M131.2 -4.1L1086.3 174.3M955.0 81.8L815.8 1163.5M133.5 -6.0L1086.3 171.4M957.6 82.3L821.4 1165.8M134.7 -7.0L1086.2 169.9M960.2 82.7L827.0 1168.0M135.9 -8.0L1086.2 168.5M962.8 83.2L832.7 1170.3M137.0 -8.9L1086.2 167.0M965.3 83.6L838.3 1172.6M138.1 -9.9L1086.2 165.5M967.9 84.1L844.0 1174.8M139.3 -10.9L1086.1 164.1M970.5 84.5L849.7 1177.1M140.4 -11.8L1086.1 162.6M973.1 85.0L855.4 1179.4M141.6 -12.8L1086.1 161.2M975.8 85.4L861.1 1181.7M142.7 -13.8L1086.1 159.8M981.0 86.3L872.6 1186.3M145.0 -15.7L1086.0 156.9M983.6 86.8L878.4 1188.6M146.1 -16.6L1086.0 155.5M986.2 87.2L884.1 1190.9M147.2 -17.6L1085.9 154.1M988.8 87.7L889.9 1193.2M148.4 -18.5L1085.9 152.6M991.4 88.1L895.7 1195.6M149.5 -19.5L1085.9 151.2M994.1 88.6L901.5 1197.9M150.6 -20.4L1085.9 149.8M996.7 89.1L907.4 1200.2M151.7 -21.3L1085.8 148.4M999.3 89.5L913.2 1202.6M152.8 -22.3L1085.8 147.0M1002.0 90.0L919.0 1204.9M153.9 -23.2L1085.8 145.6M1007.2 90.9L930.8 1209.6M156.1 -25.1L1085.7 142.9M1009.9 91.3L936.7 1212.0M157.2 -26.0L1085.7 141.5M1012.5 91.8L942.6 1214.4M158.3 -26.9L1085.7 140.1M1015.2 92.3L948.5 1216.7M159.4 -27.9L1085.6 138.7M1017.8 92.7L954.5 1219.1M160.5 -28.8L1085.6 137.3M1020.5 93.2L960.4 1221.5M161.6 -29.7L1085.6 136.0M1023.1 93.6L966.4 1223.9M162.7 -30.6L1085.6 134.6M1025.8 94.1L972.3 1226.3M163.8 -31.5L1085.5 133.3M1028.4 94.6L978.3 1228.7M164.9 -32.5L1085.5 131.9M1033.8 95.5L990.4 1233.5M167.0 -34.3L1085.5 129.2M1036.4 95.9L996.4 1236.0M168.1 -35.2L1085.4 127.9M1039.1 96.4L1002.5 1238.4M169.2 -36.1L1085.4 126.5M1041.8 96.9L1008.5 1240.8M170.3 -37.0L1085.4 125.2M1044.5 97.3L1014.6 1243.3M171.3 -37.9L1085.4 123.9M1047.2 97.8L1020.7 1245.7M172.4 -38.8L1085.3 122.5M1049.8 98.3L1026.8 1248.1M173.5 -39.7L1085.3 121.2M1052.5 98.7L1032.9 1250.6M174.5 -40.6L1085.3 119.9M1055.2 99.2L1039.1 1253.1M175.6 -41.5L1085.3 118.6M1060.6 100.1L1051.4 1258.0M177.7 -43.2L1085.2 115.9M1063.3 100.6L1057.6 1260.5M178.7 -44.1L1085.2 114.6M1066.0 101.1L1063.8 1263.0M179.8 -45.0L1085.2 113.3M1068.7 101.5L1070.0 1265.5M180.8 -45.9L1085.1 112.0M1071.4 102.0L1076.2 1268.0M181.9 -46.8L1085.1 110.8M1074.1 102.5L1082.5 1270.5M182.9 -47.7L1085.1 109.5M1076.8 102.9L1088.7 1273.0M183.9 -48.5L1085.1 108.2M1079.5 103.4L1095.0 1275.5M185.0 -49.4L1085.0 106.9M1082.3 103.9L1101.3 1278.0M186.0 -50.3L1085.0 105.6" stroke="#858a92" stroke-width="0.5" fill="none" opacity="0.45"/><path d="M187.0 -51.1L-586.2 601.2M-586.2 601.2L1107.6 1280.6M205.6 -47.9L-557.6 612.6M-550.7 571.2L1106.3 1214.8M224.4 -44.7L-528.5 624.3M-516.7 542.5L1105.2 1153.1M243.3 -41.4L-498.9 636.2M-484.0 515.0L1104.0 1095.1M262.4 -38.1L-468.8 648.3M-452.7 488.5L1103.0 1040.4M281.7 -34.8L-438.1 660.6M-422.6 463.2L1102.0 988.8M301.1 -31.4L-407.0 673.0M-393.7 438.8L1101.1 940.0M320.7 -28.0L-375.3 685.8M-365.9 415.3L1100.2 893.8M340.5 -24.6L-343.0 698.7M-339.2 392.7L1099.3 850.0M360.5 -21.1L-310.2 711.9M-313.4 371.0L1098.5 808.5M380.6 -17.6L-276.8 725.3M-288.5 350.0L1097.8 769.0M401.0 -14.1L-242.7 738.9M-264.5 329.8L1097.0 731.3M421.5 -10.5L-208.1 752.8M-241.4 310.3L1096.4 695.5M442.2 -7.0L-172.8 767.0M-219.0 291.4L1095.7 661.3M463.2 -3.3L-136.8 781.4M-197.4 273.2L1095.1 628.6M484.3 0.3L-100.2 796.1M-176.5 255.6L1094.5 597.4M505.6 4.0L-62.9 811.1M-156.3 238.5L1093.9 567.5M527.1 7.7L-24.9 826.3M-136.8 222.0L1093.3 538.9M548.8 11.5L13.9 841.9M-117.8 206.0L1092.8 511.4M570.7 15.3L53.4 857.7M-99.4 190.5L1092.3 485.1M592.9 19.1L93.7 873.9M-81.6 175.5L1091.8 459.8M615.2 23.0L134.8 890.4M-64.4 160.9L1091.4 435.4M637.8 26.9L176.8 907.2M-47.6 146.8L1090.9 412.1M660.6 30.8L219.5 924.4M-31.3 133.1L1090.5 389.5M683.6 34.8L263.2 941.9M-15.5 119.7L1090.1 367.8M706.8 38.9L307.8 959.7M-0.2 106.8L1089.7 346.9M730.3 42.9L353.3 978.0M14.7 94.2L1089.3 326.7M754.0 47.0L399.7 996.6M29.3 82.0L1088.9 307.3M777.9 51.2L447.2 1015.7M43.4 70.1L1088.5 288.5M802.1 55.4L495.7 1035.1M57.1 58.5L1088.2 270.3M826.5 59.6L545.2 1055.0M70.5 47.2L1087.8 252.7M851.2 63.9L595.9 1075.3M83.5 36.2L1087.5 235.7M876.1 68.2L647.6 1096.1M96.2 25.5L1087.2 219.2M901.3 72.5L700.6 1117.3M108.6 15.1L1086.9 203.3M926.7 76.9L754.7 1139.0M120.6 4.9L1086.6 187.8M952.4 81.4L810.2 1161.2M132.4 -5.0L1086.3 172.9M978.4 85.9L866.9 1184.0M143.8 -14.7L1086.0 158.3M1004.6 90.4L924.9 1207.3M155.0 -24.1L1085.8 144.2M1031.1 95.0L984.4 1231.1M166.0 -33.4L1085.5 130.6M1057.9 99.7L1045.2 1255.5M176.6 -42.4L1085.2 117.3M1085.0 104.3L1107.6 1280.6M187.0 -51.1L1085.0 104.3" stroke="#7f838a" stroke-width="1" fill="none"/><path d="M429.3 299.3L592.9 19.1" stroke="#3f9f3f" stroke-width="2"/><path d="M429.3 299.3L1091.8 459.8" stroke="#b34848" stroke-width="2"/></svg><svg class="a" style="left:0;top:0" width="957" height="841"><polygon points="459.6,392.3 539.2,396.3 576.5,443.9 529.4,490.5 443.4,485.5 410.4,435.6 419.2,421.5" fill="none" stroke="#f0e020" stroke-width="1.3"/><path d="M493.5 440 L419.2 421.5" stroke="#ff2020" stroke-width="2" stroke-dasharray="2.5 2.5"/><path d="M493.5 440 L462.5 491" stroke="#30e030" stroke-width="2" stroke-dasharray="2.5 2.5"/><path d="M493.5 440 L457 471" stroke="#ffffff" stroke-width="1.3" stroke-dasharray="2.5 2.5"/><circle cx="455" cy="473" r="4.5" fill="none" stroke="#fff" stroke-width="1.2"/><path d="M419.5 423 Q404 452 432 478 Q448 490 462 491" stroke="#1a1aff" stroke-width="2.2" fill="none"/><path d="M421 423 Q426 470 493.5 498" stroke="#20e020" stroke-width="2.2" fill="none"/><path d="M463 493 Q468 538 493.5 499" stroke="#ff1a1a" stroke-width="2.2" fill="none"/><path d="M493 432 L493 384" stroke="#1a1aff" stroke-width="2.5"/><path d="M488 385 L492.5 368 L497 385 Z" fill="#1a1aff"/><circle cx="493" cy="409" r="5" fill="#1a1aff"/><path d="M494 438 L520 394" stroke="#20e020" stroke-width="2.5"/><path d="M513 395 L523 389 L522 401 Z" fill="#20e020"/><path d="M494 440 L576 460" stroke="#ff1a1a" stroke-width="2.5"/><path d="M561 452 L578 459.5 L559 462 Z" fill="#ff1a1a"/><path d="M531 402 L552 409 M531 410 L570 419 M533 418 L568 428 M545 423 L569 431" stroke="#ff2020" stroke-width="1"/><path d="M531 401 V418 M540 404 V420 M550 407 V421" stroke="#2020ff" stroke-width="1"/><path d="M548 423 L552 416 M555 425 L559 418 M562 427 L566 420" stroke="#20e020" stroke-width="1"/><rect x="415.5" y="417.5" width="8" height="8" fill="none" stroke="#ff1a1a" stroke-width="2.2"/><rect x="458.5" y="487" width="8.5" height="8.5" fill="none" stroke="#20e020" stroke-width="2.2"/><circle cx="459.6" cy="392.3" r="3.2" fill="#fff" stroke="#000" stroke-width="1.1"/><circle cx="539.2" cy="396.3" r="3.2" fill="#fff" stroke="#000" stroke-width="1.1"/><circle cx="576.5" cy="443.9" r="3.2" fill="#fff" stroke="#000" stroke-width="1.1"/><circle cx="529.4" cy="490.5" r="3.2" fill="#fff" stroke="#000" stroke-width="1.1"/><circle cx="443.4" cy="485.5" r="3.2" fill="#fff" stroke="#000" stroke-width="1.1"/><circle cx="410.4" cy="435.6" r="3.2" fill="#fff" stroke="#000" stroke-width="1.1"/><circle cx="493.5" cy="440" r="3.2" fill="#fff" stroke="#000" stroke-width="1.1"/><path d="M459.6 389.7 A2.6 2.6 0 0 1 459.6 394.90000000000003 Z" fill="#f4f0a0"/><path d="M539.2 393.7 A2.6 2.6 0 0 1 539.2 398.90000000000003 Z" fill="#f4f0a0"/><path d="M576.5 441.29999999999995 A2.6 2.6 0 0 1 576.5 446.5 Z" fill="#f4f0a0"/><path d="M529.4 487.9 A2.6 2.6 0 0 1 529.4 493.1 Z" fill="#f4f0a0"/><path d="M443.4 482.9 A2.6 2.6 0 0 1 443.4 488.1 Z" fill="#f4f0a0"/><path d="M410.4 433.0 A2.6 2.6 0 0 1 410.4 438.20000000000005 Z" fill="#f4f0a0"/></svg><div class="a" style="left:63px;top:140px;width:114px;height:23px;background:#87a2f0;border-radius:0 0 4px 0"></div><div class="t" style="left:73px;top:143px;font-size:15px;font-weight:bold;color:#222633;letter-spacing:-0.45px">Perspective</div><div class="a" style="left:163px;top:142px;width:1.5px;height:19px;background:#222"></div><svg class="a" style="left:165px;top:147px" width="10" height="7"><path d="M0.5 0.5 L9 0.5 L4.75 6 Z" fill="#222"/></svg><svg class="a" style="left:100px;top:665px" width="60" height="55"><path d="M8 10 V40 L48 47 M8 40 L20 22" stroke="#4a4e56" stroke-width="1" fill="none"/></svg><div class="t" style="left:109px;top:669px;font-size:14px;color:#4a4e56">z</div><div class="t" style="left:121px;top:671px;font-size:14px;color:#4a4e56">y</div><div class="t" style="left:144px;top:703px;font-size:14px;color:#4a4e56">x</div><div class="a" style="left:943px;top:62px;width:12px;height:779px;background:linear-gradient(to right,rgba(0,0,0,0),rgba(0,0,0,0.07))"></div><div class="a" style="left:954px;top:0;width:2px;height:841px;background:#e4e5ea"></div><div class="a" style="left:956px;top:0;width:2px;height:841px;background:#575757"></div><svg class="a" style="left:60px;top:749px" width="110" height="30"><path d="M3 0.5 L3 14 L13 28.5 L94 28.5 Q97 28.5 97 25.5 L97 0.5" fill="#ebecf2" stroke="#c4cbdb" stroke-width="1"/></svg><div class="t" style="left:76px;top:757px;font-size:14.5px;color:#2b3448">Perspective</div><div class="t" style="left:172px;top:757px;font-size:14.5px;color:#2b3448">Top</div><div class="t" style="left:220px;top:757px;font-size:14.5px;color:#2b3448">Front</div><div class="t" style="left:275px;top:757px;font-size:14.5px;color:#2b3448">Right</div><svg class="a" style="left:333px;top:758px" width="14" height="14"><path d="M7 1 V13 M1 7 H13" stroke="#7a7f8a" stroke-width="3"/><path d="M7 2 V12 M2 7 H12" stroke="#ebecf2" stroke-width="1"/></svg><div class="a" style="left:2px;top:785px;width:1px;height:34px;background:#c3c7d0"></div><div class="a" style="left:4px;top:785px;width:1px;height:34px;background:#c3c7d0"></div><div class="a" style="left:10px;top:790px;width:16px;height:16px;background:#fff;border:1px solid #c2c2c2"></div><svg class="a" style="left:10px;top:790px" width="16" height="16"><path d="M3.5 8 L6.5 11 L12.5 4.5" stroke="#c8c8c8" stroke-width="1.3" fill="none"/></svg><div class="t" style="left:31px;top:791px;font-size:15px;color:#6e6e6e">End</div><div class="a" style="left:63px;top:790px;width:16px;height:16px;background:#fff;border:1px solid #c2c2c2"></div><div class="t" style="left:83px;top:791px;font-size:15px;color:#6e6e6e">Near</div><div class="a" style="left:123px;top:790px;width:16px;height:16px;background:#fff;border:1px solid #c2c2c2"></div><svg class="a" style="left:123px;top:790px" width="16" height="16"><path d="M3.5 8 L6.5 11 L12.5 4.5" stroke="#c8c8c8" stroke-width="1.3" fill="none"/></svg><div class="t" style="left:144px;top:791px;font-size:15px;color:#6e6e6e">Point</div><div class="a" style="left:185px;top:790px;width:16px;height:16px;background:#fff;border:1px solid #c2c2c2"></div><svg class="a" style="left:185px;top:790px" width="16" height="16"><path d="M3.5 8 L6.5 11 L12.5 4.5" stroke="#c8c8c8" stroke-width="1.3" fill="none"/></svg><div class="t" style="left:205px;top:791px;font-size:15px;color:#6e6e6e">Mid</div><div class="a" style="left:240px;top:790px;width:16px;height:16px;background:#fff;border:1px solid #c2c2c2"></div><div class="t" style="left:260px;top:791px;font-size:15px;color:#6e6e6e">Cen</div><div class="a" style="left:292px;top:790px;width:16px;height:16px;background:#fff;border:1px solid #c2c2c2"></div><svg class="a" style="left:292px;top:790px" width="16" height="16"><path d="M3.5 8 L6.5 11 L12.5 4.5" stroke="#c8c8c8" stroke-width="1.3" fill="none"/></svg><div class="t" style="left:312px;top:791px;font-size:15px;color:#6e6e6e">Int</div><div class="a" style="left:338px;top:790px;width:16px;height:16px;background:#fff;border:1px solid #c2c2c2"></div><svg class="a" style="left:338px;top:790px" width="16" height="16"><path d="M3.5 8 L6.5 11 L12.5 4.5" stroke="#c8c8c8" stroke-width="1.3" fill="none"/></svg><div class="t" style="left:357px;top:791px;font-size:15px;color:#6e6e6e">Perp</div><div class="a" style="left:395px;top:790px;width:16px;height:16px;background:#fff;border:1px solid #c2c2c2"></div><svg class="a" style="left:395px;top:790px" width="16" height="16"><path d="M3.5 8 L6.5 11 L12.5 4.5" stroke="#c8c8c8" stroke-width="1.3" fill="none"/></svg><div class="t" style="left:416px;top:791px;font-size:15px;color:#6e6e6e">Tan</div><div class="a" style="left:447px;top:790px;width:16px;height:16px;background:#fff;border:1px solid #c2c2c2"></div><div class="t" style="left:467px;top:791px;font-size:15px;color:#6e6e6e">Quad</div><div class="a" style="left:511px;top:790px;width:16px;height:16px;background:#fff;border:1px solid #c2c2c2"></div><svg class="a" style="left:511px;top:790px" width="16" height="16"><path d="M3.5 8 L6.5 11 L12.5 4.5" stroke="#c8c8c8" stroke-width="1.3" fill="none"/></svg><div class="t" style="left:532px;top:791px;font-size:15px;color:#6e6e6e">Knot</div><div class="a" style="left:570px;top:790px;width:16px;height:16px;background:#fff;border:1px solid #c2c2c2"></div><div class="t" style="left:591px;top:791px;font-size:15px;color:#6e6e6e">Vertex</div><div class="a" style="left:641px;top:791px;width:14px;height:14px;background:#c9c9c9"></div><div class="t" style="left:661px;top:791px;font-size:15px;color:#6e6e6e">Project</div><div class="a" style="left:726px;top:791px;width:14px;height:14px;background:#fff;border:1px solid #1c5fb0"></div><div class="a" style="left:729px;top:794px;width:8px;height:8px;background:#7a7a7a"></div><div class="t" style="left:745px;top:791px;font-size:15px;color:#2a2a2a">Disable</div><div class="a" style="left:0;top:820px;width:955px;height:1px;background:#c6cddd"></div><div class="a" style="left:697px;top:821px;width:121px;height:20px;background:#cdd6ee"></div><div class="a" style="left:42px;top:821px;width:1px;height:20px;background:#c6cddd"></div><div class="a" style="left:121px;top:821px;width:1px;height:20px;background:#c6cddd"></div><div class="a" style="left:200px;top:821px;width:1px;height:20px;background:#c6cddd"></div><div class="a" style="left:279px;top:821px;width:1px;height:20px;background:#c6cddd"></div><div class="a" style="left:359px;top:821px;width:1px;height:20px;background:#c6cddd"></div><div class="a" style="left:509px;top:821px;width:1px;height:20px;background:#c6cddd"></div><div class="a" style="left:569px;top:821px;width:1px;height:20px;background:#c6cddd"></div><div class="a" style="left:610px;top:821px;width:1px;height:20px;background:#c6cddd"></div><div class="a" style="left:653px;top:821px;width:1px;height:20px;background:#c6cddd"></div><div class="a" style="left:697px;top:821px;width:1px;height:20px;background:#c6cddd"></div><div class="a" style="left:764px;top:821px;width:1px;height:20px;background:#c6cddd"></div><div class="a" style="left:818px;top:821px;width:1px;height:20px;background:#c6cddd"></div><div class="a" style="left:902px;top:821px;width:1px;height:20px;background:#c6cddd"></div><div class="a" style="left:935px;top:821px;width:1px;height:20px;background:#c6cddd"></div><div class="t" style="left:-4px;top:824.5px;width:60px;overflow:hidden;font-size:15px;letter-spacing:-0.3px;font-weight:normal;color:#1e1e1e">CPlane</div><div class="t" style="left:59px;top:824.5px;width:60px;overflow:hidden;font-size:15px;letter-spacing:-0.3px;font-weight:normal;color:#1e1e1e">x 48.67</div><div class="t" style="left:130px;top:824.5px;width:70px;overflow:hidden;font-size:15px;letter-spacing:-0.3px;font-weight:normal;color:#1e1e1e">y -108.67</div><div class="t" style="left:236px;top:824.5px;width:20px;overflow:hidden;font-size:15px;letter-spacing:-0.3px;font-weight:normal;color:#1e1e1e">z</div><div class="t" style="left:305px;top:824.5px;width:40px;overflow:hidden;font-size:15px;letter-spacing:-0.3px;font-weight:normal;color:#1e1e1e">Feet</div><div class="t" style="left:381px;top:824.5px;width:100px;overflow:hidden;font-size:15px;letter-spacing:-0.3px;font-weight:normal;color:#1e1e1e">Default</div><div class="t" style="left:511px;top:824.5px;width:58px;overflow:hidden;font-size:15px;letter-spacing:-0.3px;font-weight:normal;color:#1e1e1e">Grid Snap</div><div class="t" style="left:571px;top:824.5px;width:39px;overflow:hidden;font-size:15px;letter-spacing:-0.3px;font-weight:normal;color:#1e1e1e">Ortho</div><div class="t" style="left:612px;top:824.5px;width:41px;overflow:hidden;font-size:15px;letter-spacing:-0.3px;font-weight:normal;color:#1e1e1e">Planar</div><div class="t" style="left:655px;top:824.5px;width:42px;overflow:hidden;font-size:15px;letter-spacing:-0.3px;font-weight:normal;color:#1e1e1e">Osnap</div><div class="t" style="left:699px;top:824.5px;width:65px;overflow:hidden;font-size:15px;letter-spacing:-0.3px;font-weight:bold;color:#1e1e1e">SmartTrack</div><div class="t" style="left:766px;top:824.5px;width:52px;overflow:hidden;font-size:15px;letter-spacing:-0.3px;font-weight:bold;color:#1e1e1e">Gumball</div><div class="t" style="left:820px;top:824.5px;width:82px;overflow:hidden;font-size:15px;letter-spacing:-0.3px;font-weight:normal;color:#1e1e1e">Record History</div><div class="t" style="left:903px;top:824.5px;width:32px;overflow:hidden;font-size:15px;letter-spacing:-0.3px;font-weight:normal;color:#1e1e1e">Filter</div><div class="a" style="left:363px;top:825px;width:14px;height:14px;background:#000"></div></div><div class="a" style="left:958px;top:0;width:943px;height:841px;background:#f6f6f6;overflow:hidden"></div><svg class="a" style="left:978px;top:28px" width="898" height="578"><g transform="translate(-978,-28)"><rect x="978" y="0" width="898" height="606" fill="#ffffff"/><polygon points="1285.7,274.9 1748.6,322.2 2845.1,1961.9 577.6,710.2" fill="#878a8c"/><defs><filter id="blur" x="-50%" y="-50%" width="200%" height="200%"><feGaussianBlur stdDeviation="9"/></filter><clipPath id="gclip"><polygon points="1285.7,274.9 1748.6,322.2 2845.1,1961.9 577.6,710.2"/></clipPath></defs><g clip-path="url(#gclip)"><polygon points="447.6,713.4 526.2,681.4 1405.3,407.7 1426.5,404.4 1447.8,407.5 1464.5,416.4 1472.3,429.6 1468.0,443.8 1451.5,455.1 348.3,868.1 267.6,888.1 243.2,869.0 280.9,820.4 358.6,762.8" fill="#55595c" opacity="0.5" filter="url(#blur)"/></g><g clip-path="url(#gclip)"><path d="M1285.7 274.9L577.6 710.2M1285.7 274.9L1748.6 322.2M1304.3 276.8L616.6 731.7M1274.6 281.7L1755.8 333.0M1323.4 278.7L658.4 754.8M1262.7 289.0L1763.7 344.8M1342.9 280.7L703.2 779.5M1249.9 296.9L1772.4 357.8M1362.7 282.8L751.6 806.2M1236.0 305.4L1782.0 372.1M1383.0 284.8L803.8 835.0M1221.0 314.6L1792.6 388.1M1403.7 287.0L860.3 866.3M1204.6 324.7L1804.6 405.9M1424.9 289.1L921.8 900.2M1186.8 335.7L1818.0 426.0M1446.5 291.3L988.9 937.2M1167.2 347.7L1833.2 448.8M1468.6 293.6L1062.4 977.8M1145.6 361.0L1850.7 474.9M1491.2 295.9L1143.3 1022.4M1121.6 375.7L1870.9 505.0M1514.3 298.3L1232.6 1071.8M1095.0 392.1L1894.4 540.3M1538.0 300.7L1332.0 1126.6M1065.2 410.4L1922.3 582.0M1562.2 303.2L1443.1 1187.9M1031.5 431.1L1955.8 632.1M1586.9 305.7L1568.0 1256.9M993.2 454.6L1996.9 693.6M1612.3 308.3L1709.7 1335.2M949.4 481.6L2048.5 770.7M1638.2 310.9L1871.7 1424.6M898.6 512.9L2115.0 870.2M1664.8 313.7L2058.7 1527.8M839.0 549.5L2204.2 1003.6M1692.1 316.5L2277.0 1648.3M768.3 593.0L2330.1 1191.9M1720.0 319.3L2535.1 1790.8M682.8 645.5L2521.1 1477.4M1748.6 322.2L2845.1 1961.9M577.6 710.2L2845.1 1961.9" stroke="#6f7275" stroke-width="0.8" opacity="0.38" fill="none"/></g><polygon points="1426.9,462.7 1472.2,445.4 1472.8,430.7 1426.9,447.6" fill="#d01817" stroke="#d01817" stroke-width="0.6" stroke-linejoin="round"/><polygon points="1381.5,445.6 1426.9,462.7 1426.9,447.6 1380.9,430.9" fill="#ca1716" stroke="#ca1716" stroke-width="0.6" stroke-linejoin="round"/><polygon points="1426.9,447.6 1472.8,430.7 1468.8,401.5 1426.7,388.7 1384.6,401.6 1380.9,430.9" fill="#e01c1c" stroke="#e01c1c" stroke-width="0.6" stroke-linejoin="round"/><polygon points="1426.9,452.5 1479.4,432.9 1479.6,428.4 1426.9,447.8" fill="#cfcf0c" stroke="#cfcf0c" stroke-width="0.6" stroke-linejoin="round"/><polygon points="1374.3,433.1 1426.9,452.5 1426.9,447.8 1374.0,428.6" fill="#c9c90c" stroke="#c9c90c" stroke-width="0.6" stroke-linejoin="round"/><polygon points="1426.9,447.8 1479.6,428.4 1474.4,395.4 1426.6,381.3 1379.0,395.6 1374.0,428.6" fill="#fafa20" stroke="#fafa20" stroke-width="0.6" stroke-linejoin="round"/><polygon points="1429.1,442.9 1473.9,425.1 1474.5,411.4 1429.1,428.7" fill="#d21817" stroke="#d21817" stroke-width="0.6" stroke-linejoin="round"/><polygon points="1381.6,427.5 1429.1,442.9 1429.1,428.7 1381.0,413.7" fill="#c81716" stroke="#c81716" stroke-width="0.6" stroke-linejoin="round"/><polygon points="1429.1,428.7 1474.5,411.4 1468.3,383.5 1424.8,372.1 1382.9,385.3 1381.0,413.7" fill="#e01c1c" stroke="#e01c1c" stroke-width="0.6" stroke-linejoin="round"/><polygon points="1429.5,433.4 1481.3,413.4 1481.5,408.7 1429.5,428.5" fill="#d1d10c" stroke="#d1d10c" stroke-width="0.6" stroke-linejoin="round"/><polygon points="1374.4,416.0 1429.5,433.4 1429.5,428.5 1374.2,411.3" fill="#c7c70c" stroke="#c7c70c" stroke-width="0.6" stroke-linejoin="round"/><polygon points="1429.5,428.5 1481.5,408.7 1473.8,377.3 1424.5,364.7 1377.0,379.4 1374.2,411.3" fill="#fafa20" stroke="#fafa20" stroke-width="0.6" stroke-linejoin="round"/><polygon points="1432.1,423.8 1475.7,405.4 1476.3,391.2 1432.2,409.0" fill="#d51817" stroke="#d51817" stroke-width="0.6" stroke-linejoin="round"/><polygon points="1382.2,410.3 1432.1,423.8 1432.2,409.0 1381.6,396.0" fill="#c71715" stroke="#c71715" stroke-width="0.6" stroke-linejoin="round"/><polygon points="1432.2,409.0 1476.3,391.2 1467.3,364.8 1422.2,355.0 1380.9,368.8 1381.6,396.0" fill="#e01c1c" stroke="#e01c1c" stroke-width="0.6" stroke-linejoin="round"/><polygon points="1433.0,413.5 1483.4,392.9 1483.6,388.0 1433.1,408.5" fill="#d3d30c" stroke="#d3d30c" stroke-width="0.6" stroke-linejoin="round"/><polygon points="1375.1,398.4 1433.0,413.5 1433.1,408.5 1374.9,393.5" fill="#c5c50c" stroke="#c5c50c" stroke-width="0.6" stroke-linejoin="round"/><polygon points="1433.1,408.5 1483.6,388.0 1472.7,358.4 1421.7,347.7 1374.7,362.9 1374.9,393.5" fill="#fafa20" stroke="#fafa20" stroke-width="0.6" stroke-linejoin="round"/><polygon points="1438.5,403.5 1478.2,383.5 1478.9,369.0 1438.6,388.3" fill="#db1918" stroke="#db1918" stroke-width="0.6" stroke-linejoin="round"/><polygon points="1378.2,366.8 1384.9,393.7 1384.3,378.8 1377.6,352.9" fill="#ff1d1c" stroke="#ff1d1c" stroke-width="0.6" stroke-linejoin="round"/><polygon points="1384.9,393.7 1438.5,403.5 1438.6,388.3 1384.3,378.8" fill="#c41615" stroke="#c41615" stroke-width="0.6" stroke-linejoin="round"/><polygon points="1438.6,388.3 1478.9,369.0 1464.3,344.7 1416.9,337.7 1377.6,352.9 1384.3,378.8" fill="#e01c1c" stroke="#e01c1c" stroke-width="0.6" stroke-linejoin="round"/><polygon points="1440.4,392.5 1486.2,370.1 1486.5,365.2 1440.5,387.2" fill="#dada0d" stroke="#dada0d" stroke-width="0.6" stroke-linejoin="round"/><polygon points="1371.1,351.8 1378.1,381.5 1377.8,376.4 1370.9,347.1" fill="#fefe0f" stroke="#fefe0f" stroke-width="0.6" stroke-linejoin="round"/><polygon points="1378.1,381.5 1440.4,392.5 1440.5,387.2 1377.8,376.4" fill="#c3c30b" stroke="#c3c30b" stroke-width="0.6" stroke-linejoin="round"/><polygon points="1440.5,387.2 1486.5,365.2 1469.2,338.0 1415.6,330.4 1370.9,347.1 1377.8,376.4" fill="#fafa20" stroke="#fafa20" stroke-width="0.6" stroke-linejoin="round"/><polygon points="1443.9,382.4 1480.0,361.7 1480.7,346.7 1444.1,366.6" fill="#e11a18" stroke="#e11a18" stroke-width="0.6" stroke-linejoin="round"/><polygon points="1375.7,350.3 1387.5,375.6 1387.0,360.1 1375.1,335.8" fill="#f81c1b" stroke="#f81c1b" stroke-width="0.6" stroke-linejoin="round"/><polygon points="1387.5,375.6 1443.9,382.4 1444.1,366.6 1387.0,360.1" fill="#c21615" stroke="#c21615" stroke-width="0.6" stroke-linejoin="round"/><polygon points="1444.1,366.6 1480.7,346.7 1461.4,324.6 1412.3,319.9 1375.1,335.8 1387.0,360.1" fill="#e01c1c" stroke="#e01c1c" stroke-width="0.6" stroke-linejoin="round"/><polygon points="1446.7,370.4 1488.3,347.5 1488.5,342.4 1446.8,365.0" fill="#dfdf0d" stroke="#dfdf0d" stroke-width="0.6" stroke-linejoin="round"/><polygon points="1368.2,335.1 1381.1,362.9 1380.8,357.6 1367.9,330.2" fill="#f6f60f" stroke="#f6f60f" stroke-width="0.6" stroke-linejoin="round"/><polygon points="1381.1,362.9 1446.7,370.4 1446.8,365.0 1380.8,357.6" fill="#c1c10b" stroke="#c1c10b" stroke-width="0.6" stroke-linejoin="round"/><polygon points="1446.8,365.0 1488.5,342.4 1465.9,317.8 1410.5,312.7 1367.9,330.2 1380.8,357.6" fill="#fafa20" stroke="#fafa20" stroke-width="0.6" stroke-linejoin="round"/><polygon points="1450.9,360.0 1481.4,338.7 1482.2,323.3 1451.3,343.6" fill="#e91b19" stroke="#e91b19" stroke-width="0.6" stroke-linejoin="round"/><polygon points="1373.2,333.6 1392.0,357.0 1391.5,340.8 1372.5,318.5" fill="#ee1b1a" stroke="#ee1b1a" stroke-width="0.6" stroke-linejoin="round"/><polygon points="1392.0,357.0 1450.9,360.0 1451.3,343.6 1391.5,340.8" fill="#c11615" stroke="#c11615" stroke-width="0.6" stroke-linejoin="round"/><polygon points="1451.3,343.6 1482.2,323.3 1456.9,303.9 1406.2,301.9 1372.5,318.5 1391.5,340.8" fill="#e01c1c" stroke="#e01c1c" stroke-width="0.6" stroke-linejoin="round"/><polygon points="1455.0,347.0 1489.8,323.7 1490.1,318.4 1455.1,341.4" fill="#e8e80e" stroke="#e8e80e" stroke-width="0.6" stroke-linejoin="round"/><polygon points="1365.2,318.2 1386.2,343.7 1386.0,338.2 1364.9,313.1" fill="#eded0e" stroke="#eded0e" stroke-width="0.6" stroke-linejoin="round"/><polygon points="1386.2,343.7 1455.0,347.0 1455.1,341.4 1386.0,338.2" fill="#c0c00b" stroke="#c0c00b" stroke-width="0.6" stroke-linejoin="round"/><polygon points="1455.1,341.4 1490.1,318.4 1460.8,297.0 1403.6,294.8 1364.9,313.1 1386.0,338.2" fill="#fafa20" stroke="#fafa20" stroke-width="0.6" stroke-linejoin="round"/><polygon points="1456.2,337.0 1482.2,316.1 1483.0,300.3 1456.7,320.0" fill="#f01b1a" stroke="#f01b1a" stroke-width="0.6" stroke-linejoin="round"/><polygon points="1371.4,315.4 1395.8,336.6 1395.3,319.6 1370.7,299.7" fill="#e81a19" stroke="#e81a19" stroke-width="0.6" stroke-linejoin="round"/><polygon points="1395.8,336.6 1456.2,337.0 1456.7,320.0 1395.3,319.6" fill="#c11615" stroke="#c11615" stroke-width="0.6" stroke-linejoin="round"/><polygon points="1456.7,320.0 1483.0,300.3 1453.3,283.4 1401.6,283.1 1370.7,299.7 1395.3,319.6" fill="#e01c1c" stroke="#e01c1c" stroke-width="0.6" stroke-linejoin="round"/><polygon points="1461.2,323.0 1490.6,300.3 1490.9,295.0 1461.4,317.2" fill="#efef0e" stroke="#efef0e" stroke-width="0.6" stroke-linejoin="round"/><polygon points="1363.1,299.6 1390.6,322.6 1390.4,316.8 1362.8,294.3" fill="#e6e60e" stroke="#e6e60e" stroke-width="0.6" stroke-linejoin="round"/><polygon points="1390.6,322.6 1461.2,323.0 1461.4,317.2 1390.4,316.8" fill="#c0c00b" stroke="#c0c00b" stroke-width="0.6" stroke-linejoin="round"/><polygon points="1461.4,317.2 1490.9,295.0 1456.7,276.3 1398.3,276.1 1362.8,294.3 1390.4,316.8" fill="#fafa20" stroke="#fafa20" stroke-width="0.6" stroke-linejoin="round"/><polygon points="1461.2,313.1 1482.6,293.1 1483.3,276.9 1461.7,295.6" fill="#f71c1b" stroke="#f71c1b" stroke-width="0.6" stroke-linejoin="round"/><polygon points="1370.1,296.1 1399.8,314.9 1399.4,297.2 1369.3,279.7" fill="#e21a18" stroke="#e21a18" stroke-width="0.6" stroke-linejoin="round"/><polygon points="1399.8,314.9 1461.2,313.1 1461.7,295.6 1399.4,297.2" fill="#c21615" stroke="#c21615" stroke-width="0.6" stroke-linejoin="round"/><polygon points="1461.7,295.6 1483.3,276.9 1449.6,262.4 1397.1,263.6 1369.3,279.7 1399.4,297.2" fill="#e01c1c" stroke="#e01c1c" stroke-width="0.6" stroke-linejoin="round"/><polygon points="1467.0,298.2 1491.0,276.7 1491.3,271.2 1467.2,292.1" fill="#f5f50f" stroke="#f5f50f" stroke-width="0.6" stroke-linejoin="round"/><polygon points="1361.4,279.9 1395.2,300.1 1395.0,294.1 1361.1,274.3" fill="#e0e00d" stroke="#e0e00d" stroke-width="0.6" stroke-linejoin="round"/><polygon points="1395.2,300.1 1467.0,298.2 1467.2,292.1 1395.0,294.1" fill="#c1c10b" stroke="#c1c10b" stroke-width="0.6" stroke-linejoin="round"/><polygon points="1467.2,292.1 1491.3,271.2 1452.5,255.4 1393.3,256.7 1361.1,274.3 1395.0,294.1" fill="#fafa20" stroke="#fafa20" stroke-width="0.6" stroke-linejoin="round"/><polygon points="1465.1,288.8 1482.8,270.2 1483.6,253.4 1465.6,270.6" fill="#fc1d1b" stroke="#fc1d1b" stroke-width="0.6" stroke-linejoin="round"/><polygon points="1369.1,275.3 1402.9,291.8 1402.6,273.4 1368.3,258.2" fill="#dd1918" stroke="#dd1918" stroke-width="0.6" stroke-linejoin="round"/><polygon points="1402.9,291.8 1465.1,288.8 1465.6,270.6 1402.6,273.4" fill="#c31615" stroke="#c31615" stroke-width="0.6" stroke-linejoin="round"/><polygon points="1465.6,270.6 1483.6,253.4 1446.8,241.2 1393.7,243.2 1368.3,258.2 1402.6,273.4" fill="#e01c1c" stroke="#e01c1c" stroke-width="0.6" stroke-linejoin="round"/><polygon points="1471.5,272.8 1491.2,253.1 1491.5,247.4 1471.7,266.5" fill="#fbfb0f" stroke="#fbfb0f" stroke-width="0.6" stroke-linejoin="round"/><polygon points="1360.2,258.5 1398.9,276.1 1398.7,269.8 1359.9,252.7" fill="#dcdc0d" stroke="#dcdc0d" stroke-width="0.6" stroke-linejoin="round"/><polygon points="1398.9,276.1 1471.5,272.8 1471.7,266.5 1398.7,269.8" fill="#c2c20b" stroke="#c2c20b" stroke-width="0.6" stroke-linejoin="round"/><polygon points="1471.7,266.5 1491.5,247.4 1449.3,234.1 1389.4,236.3 1359.9,252.7 1398.7,269.8" fill="#fafa20" stroke="#fafa20" stroke-width="0.6" stroke-linejoin="round"/><polygon points="1467.4,263.9 1483.3,247.2 1484.1,229.9 1468.1,245.0" fill="#ff1d1c" stroke="#ff1d1c" stroke-width="0.6" stroke-linejoin="round"/><polygon points="1368.1,253.0 1404.5,267.4 1404.2,248.2 1367.3,235.1" fill="#db1918" stroke="#db1918" stroke-width="0.6" stroke-linejoin="round"/><polygon points="1404.5,267.4 1467.4,263.9 1468.1,245.0 1404.2,248.2" fill="#c41615" stroke="#c41615" stroke-width="0.6" stroke-linejoin="round"/><polygon points="1468.1,245.0 1484.1,229.9 1445.3,219.5 1391.5,221.7 1367.3,235.1 1404.2,248.2" fill="#e01c1c" stroke="#e01c1c" stroke-width="0.6" stroke-linejoin="round"/><polygon points="1474.3,246.9 1491.8,229.5 1492.1,223.7 1474.5,240.4" fill="#fdfd0f" stroke="#fdfd0f" stroke-width="0.6" stroke-linejoin="round"/><polygon points="1359.0,235.5 1400.7,250.6 1400.5,244.0 1358.7,229.4" fill="#dada0d" stroke="#dada0d" stroke-width="0.6" stroke-linejoin="round"/><polygon points="1400.7,250.6 1474.3,246.9 1474.5,240.4 1400.5,244.0" fill="#c3c30b" stroke="#c3c30b" stroke-width="0.6" stroke-linejoin="round"/><polygon points="1474.5,240.4 1492.1,223.7 1447.7,212.5 1386.9,214.8 1358.7,229.4 1400.5,244.0" fill="#fafa20" stroke="#fafa20" stroke-width="0.6" stroke-linejoin="round"/><polygon points="1468.5,238.6 1484.3,223.9 1485.1,206.0 1469.1,218.9" fill="#ff1d1c" stroke="#ff1d1c" stroke-width="0.6" stroke-linejoin="round"/><polygon points="1367.0,229.1 1404.3,241.7 1403.9,221.6 1366.1,210.5" fill="#db1918" stroke="#db1918" stroke-width="0.6" stroke-linejoin="round"/><polygon points="1404.3,241.7 1468.5,238.6 1469.1,218.9 1403.9,221.6" fill="#c41615" stroke="#c41615" stroke-width="0.6" stroke-linejoin="round"/><polygon points="1469.1,218.9 1485.1,206.0 1445.4,197.2 1390.7,199.1 1366.1,210.5 1403.9,221.6" fill="#e01c1c" stroke="#e01c1c" stroke-width="0.6" stroke-linejoin="round"/><polygon points="1475.5,220.5 1492.9,205.7 1493.2,199.6 1475.8,213.7" fill="#fefe0f" stroke="#fefe0f" stroke-width="0.6" stroke-linejoin="round"/><polygon points="1357.7,210.8 1400.4,223.7 1400.3,216.8 1357.3,204.5" fill="#dada0d" stroke="#dada0d" stroke-width="0.6" stroke-linejoin="round"/><polygon points="1400.4,223.7 1475.5,220.5 1475.8,213.7 1400.3,216.8" fill="#c3c30b" stroke="#c3c30b" stroke-width="0.6" stroke-linejoin="round"/><polygon points="1475.8,213.7 1493.2,199.6 1447.8,190.2 1386.0,192.3 1357.3,204.5 1400.3,216.8" fill="#fafa20" stroke="#fafa20" stroke-width="0.6" stroke-linejoin="round"/><polygon points="1468.9,212.3 1485.5,200.0 1486.4,181.3 1469.6,191.7" fill="#fe1d1c" stroke="#fe1d1c" stroke-width="0.6" stroke-linejoin="round"/><polygon points="1365.8,204.1 1403.3,214.8 1402.9,193.9 1364.9,184.8" fill="#db1918" stroke="#db1918" stroke-width="0.6" stroke-linejoin="round"/><polygon points="1403.3,214.8 1468.9,212.3 1469.6,191.7 1402.9,193.9" fill="#c41615" stroke="#c41615" stroke-width="0.6" stroke-linejoin="round"/><polygon points="1469.6,191.7 1486.4,181.3 1446.2,174.2 1390.4,175.6 1364.9,184.8 1402.9,193.9" fill="#e01c1c" stroke="#e01c1c" stroke-width="0.6" stroke-linejoin="round"/><polygon points="1476.1,193.0 1494.4,181.1 1494.7,174.8 1476.3,186.0" fill="#fdfd0f" stroke="#fdfd0f" stroke-width="0.6" stroke-linejoin="round"/><polygon points="1356.3,185.0 1399.2,195.5 1399.1,188.3 1355.9,178.5" fill="#dada0d" stroke="#dada0d" stroke-width="0.6" stroke-linejoin="round"/><polygon points="1399.2,195.5 1476.1,193.0 1476.3,186.0 1399.1,188.3" fill="#c3c30b" stroke="#c3c30b" stroke-width="0.6" stroke-linejoin="round"/><polygon points="1476.3,186.0 1494.7,174.8 1448.7,167.3 1385.7,168.8 1355.9,178.5 1399.1,188.3" fill="#fafa20" stroke="#fafa20" stroke-width="0.6" stroke-linejoin="round"/><polygon points="1470.0,184.7 1486.6,174.9 1487.5,155.5 1470.7,163.3" fill="#ff1d1c" stroke="#ff1d1c" stroke-width="0.6" stroke-linejoin="round"/><polygon points="1364.6,178.3 1403.0,186.8 1402.6,164.9 1363.6,158.2" fill="#db1918" stroke="#db1918" stroke-width="0.6" stroke-linejoin="round"/><polygon points="1403.0,186.8 1470.0,184.7 1470.7,163.3 1402.6,164.9" fill="#c41615" stroke="#c41615" stroke-width="0.6" stroke-linejoin="round"/><polygon points="1470.7,163.3 1487.5,155.5 1446.3,150.3 1389.6,151.4 1363.6,158.2 1402.6,164.9" fill="#e01c1c" stroke="#e01c1c" stroke-width="0.6" stroke-linejoin="round"/><polygon points="1477.4,164.3 1495.6,155.4 1495.9,148.8 1477.7,156.9" fill="#fdfd0f" stroke="#fdfd0f" stroke-width="0.6" stroke-linejoin="round"/><polygon points="1354.8,158.4 1398.9,166.2 1398.8,158.6 1354.5,151.5" fill="#dada0d" stroke="#dada0d" stroke-width="0.6" stroke-linejoin="round"/><polygon points="1398.9,166.2 1477.4,164.3 1477.7,156.9 1398.8,158.6" fill="#c3c30b" stroke="#c3c30b" stroke-width="0.6" stroke-linejoin="round"/><polygon points="1477.7,156.9 1495.9,148.8 1448.8,143.5 1384.7,144.6 1354.5,151.5 1398.8,158.6" fill="#fafa20" stroke="#fafa20" stroke-width="0.6" stroke-linejoin="round"/></g></svg><div class="a" style="left:958px;top:0;width:938px;height:28px;background:#3c3b48"></div><div class="a" style="left:1185px;top:0;width:4px;height:5px;background:#fff"></div><div class="a" style="left:1876px;top:28px;width:20px;height:813px;background:#f3f3f3"></div><div class="a" style="left:1896px;top:0;width:5px;height:841px;background:#f1f1f1"></div><div class="a" style="left:1876px;top:28px;width:3px;height:813px;background:linear-gradient(to right,#e8e8e8,#f6f6f6)"></div><div class="a" style="left:1898px;top:30px;width:3px;height:316px;background:#c1c1c1"></div><svg class="a" style="left:1680px;top:28px" width="200" height="16"><g transform="translate(-1680,-28)"><rect x="1692.4" y="22" width="17" height="12.7" rx="1.5" fill="#000"/><path d="M1708 27 L1715 34.5 L1715 22 Z" fill="#000"/><rect x="1742.6" y="20" width="21.6" height="18.7" rx="2.5" fill="#000"/><path d="M1746 28 v3.5 M1746 28.5 h4 M1750 28 v3.5 M1754 28 v3.5 M1754 28.5 h4 M1758 28 v3.5" stroke="#fff" stroke-width="1.6"/><path d="M1792.5 34 v4.5 h5 M1809.5 38.5 h5 v-4.5" stroke="#000" stroke-width="2.8" fill="none"/><circle cx="1801" cy="26" r="4.2" fill="none" stroke="#000" stroke-width="2.6"/><path d="M1804 29 L1809.5 34" stroke="#000" stroke-width="2.8"/><path d="M1846 30 v4.8 h5 M1856.5 34.8 h5 v-4.8" stroke="#000" stroke-width="2.8" fill="none"/></g></svg><div class="a" style="left:978px;top:606px;width:898px;height:60px;background:#f7f7f7"></div><div class="a" style="left:978px;top:661px;width:180px;height:5px;background:#3a3a46"></div><div class="a" style="left:1158px;top:665px;width:718px;height:1.5px;background:#b8b8cc"></div><div class="a" style="left:978px;top:666px;width:878px;height:175px;background:#ffffff"></div><svg class="a" style="left:978px;top:606px" width="898" height="60"><g transform="translate(-978,-606)"><path d="M1055.2 629.3 H1080.2 M1055.2 641.9 H1080.2" stroke="#33333f" stroke-width="2"/><circle cx="1072.6" cy="629.3" r="3.9" fill="#f7f7f7" stroke="#33333f" stroke-width="2"/><circle cx="1062.7" cy="641.9" r="3.9" fill="#f7f7f7" stroke="#33333f" stroke-width="2"/><path d="M1253.4 633 V628.4 Q1253.4 627.4 1252.4 627.4 H1236.4 Q1235.4 627.4 1235.4 628.4 V643.1 Q1235.4 644.1 1236.4 644.1 H1252.4 Q1253.4 644.1 1253.4 643.1 V638.5" stroke="#6e6e6e" stroke-width="2" fill="none"/><path d="M1245.2 635.6 H1257" stroke="#6e6e6e" stroke-width="2"/><path d="M1256 631.5 L1261 635.6 L1256 639.7 Z" fill="#6e6e6e"/><path d="M1417.2 628.3 V646.2 H1433" stroke="#6e6e6e" stroke-width="2" fill="none"/><rect x="1420.8" y="623" width="17.1" height="19.8" rx="2" fill="#6e6e6e"/><path d="M1424 623 V629 L1426.7 627 L1429.4 629 V623 Z" fill="#f7f7f7"/><path d="M1595.4 627 H1604 L1614 637.5 L1607.5 644.5 L1595.4 632.5 Z" stroke="#6e6e6e" stroke-width="2" fill="none" stroke-linejoin="round"/><circle cx="1599.6" cy="631.2" r="1.4" fill="#6e6e6e"/><path d="M1608 627 L1618.4 636.8 L1611 644.5" stroke="#6e6e6e" stroke-width="2" fill="none"/><rect x="1778" y="624.9" width="16.7" height="16.6" rx="1.8" fill="#6e6e6e"/><path d="M1782 633.5 L1785 636.5 L1790.5 630.5" stroke="#f7f7f7" stroke-width="1.9" fill="none"/><path d="M1786.4 641.5 V646 M1774.2 647 H1798.6" stroke="#6e6e6e" stroke-width="1.8"/><ellipse cx="1786.4" cy="647" rx="3.4" ry="2.3" fill="#6e6e6e"/></g></svg><div class="t" style="left:997px;top:691px;font-size:18px;font-weight:bold;color:#1a1a1a;letter-spacing:-0.9px">PARAMETERS</div><svg class="a" style="left:1655px;top:685px" width="170" height="30"><path d="M10 20 Q14 9 24 11 Q30 12 34 21" stroke="#5a5a5a" stroke-width="2.6" fill="none"/><path d="M9 8 L9 21 L21 21 Z" fill="#5a5a5a"/><path d="M81 21 Q85 12 94 11 Q101 11 104 20" stroke="#bbbbbb" stroke-width="2.6" fill="none"/><path d="M105 8 L105 21 L93 21 Z" fill="#bbbbbb"/><circle cx="157" cy="6" r="2.3" fill="#555"/><circle cx="157" cy="15" r="2.3" fill="#555"/><circle cx="157" cy="24" r="2.3" fill="#555"/></svg><div class="a" style="left:988px;top:734px;width:857px;height:102px;border:1px dashed #bdbdbd;border-radius:4px"></div><div class="t" style="left:998px;top:750px;font-size:19px;color:#111;letter-spacing:0.75px">FloorPolyline</div><svg class="a" style="left:1002px;top:785px" width="28" height="28"><circle cx="13.5" cy="13.5" r="11.3" fill="none" stroke="#6e6e6e" stroke-width="2.2"/><path d="M5.5 5.5 L21.5 21.5" stroke="#6e6e6e" stroke-width="2.2"/></svg><div class="t" style="left:1039px;top:790px;font-size:19.5px;font-style:italic;color:#a3a6bb;letter-spacing:0.2px">Clear selection</div><div class="a" style="left:1784px;top:775px;width:50px;height:50px;border-radius:50%;background:#73aff7"></div><svg class="a" style="left:1784px;top:775px" width="50" height="50"><rect x="17" y="13" width="16" height="15" rx="1.5" fill="#12141c"/><path d="M25 25 V17 M21 20.5 L25 16.5 L29 20.5" stroke="#73aff7" stroke-width="2.4" fill="none"/><path d="M25 28 V32 M13 33 H37" stroke="#12141c" stroke-width="2"/><circle cx="25" cy="33" r="2.5" fill="#12141c"/></svg><div class="a" style="left:1773.5px;top:764.5px;width:25px;height:25px;border-radius:50%;background:#9e9e9e"></div><div class="t" style="left:1781px;top:769px;font-size:15px;color:#fff">1</div><div class="a" style="left:1856px;top:666px;width:20px;height:175px;background:#f1f1f1"></div><div class="a" style="left:1857px;top:688px;width:17px;height:153px;background:#c1c1c1"></div><svg class="a" style="left:1856px;top:672px" width="20" height="12"><path d="M5 10 L10 5 L15 10 Z" fill="#a3a3a3"/></svg></body></html>
